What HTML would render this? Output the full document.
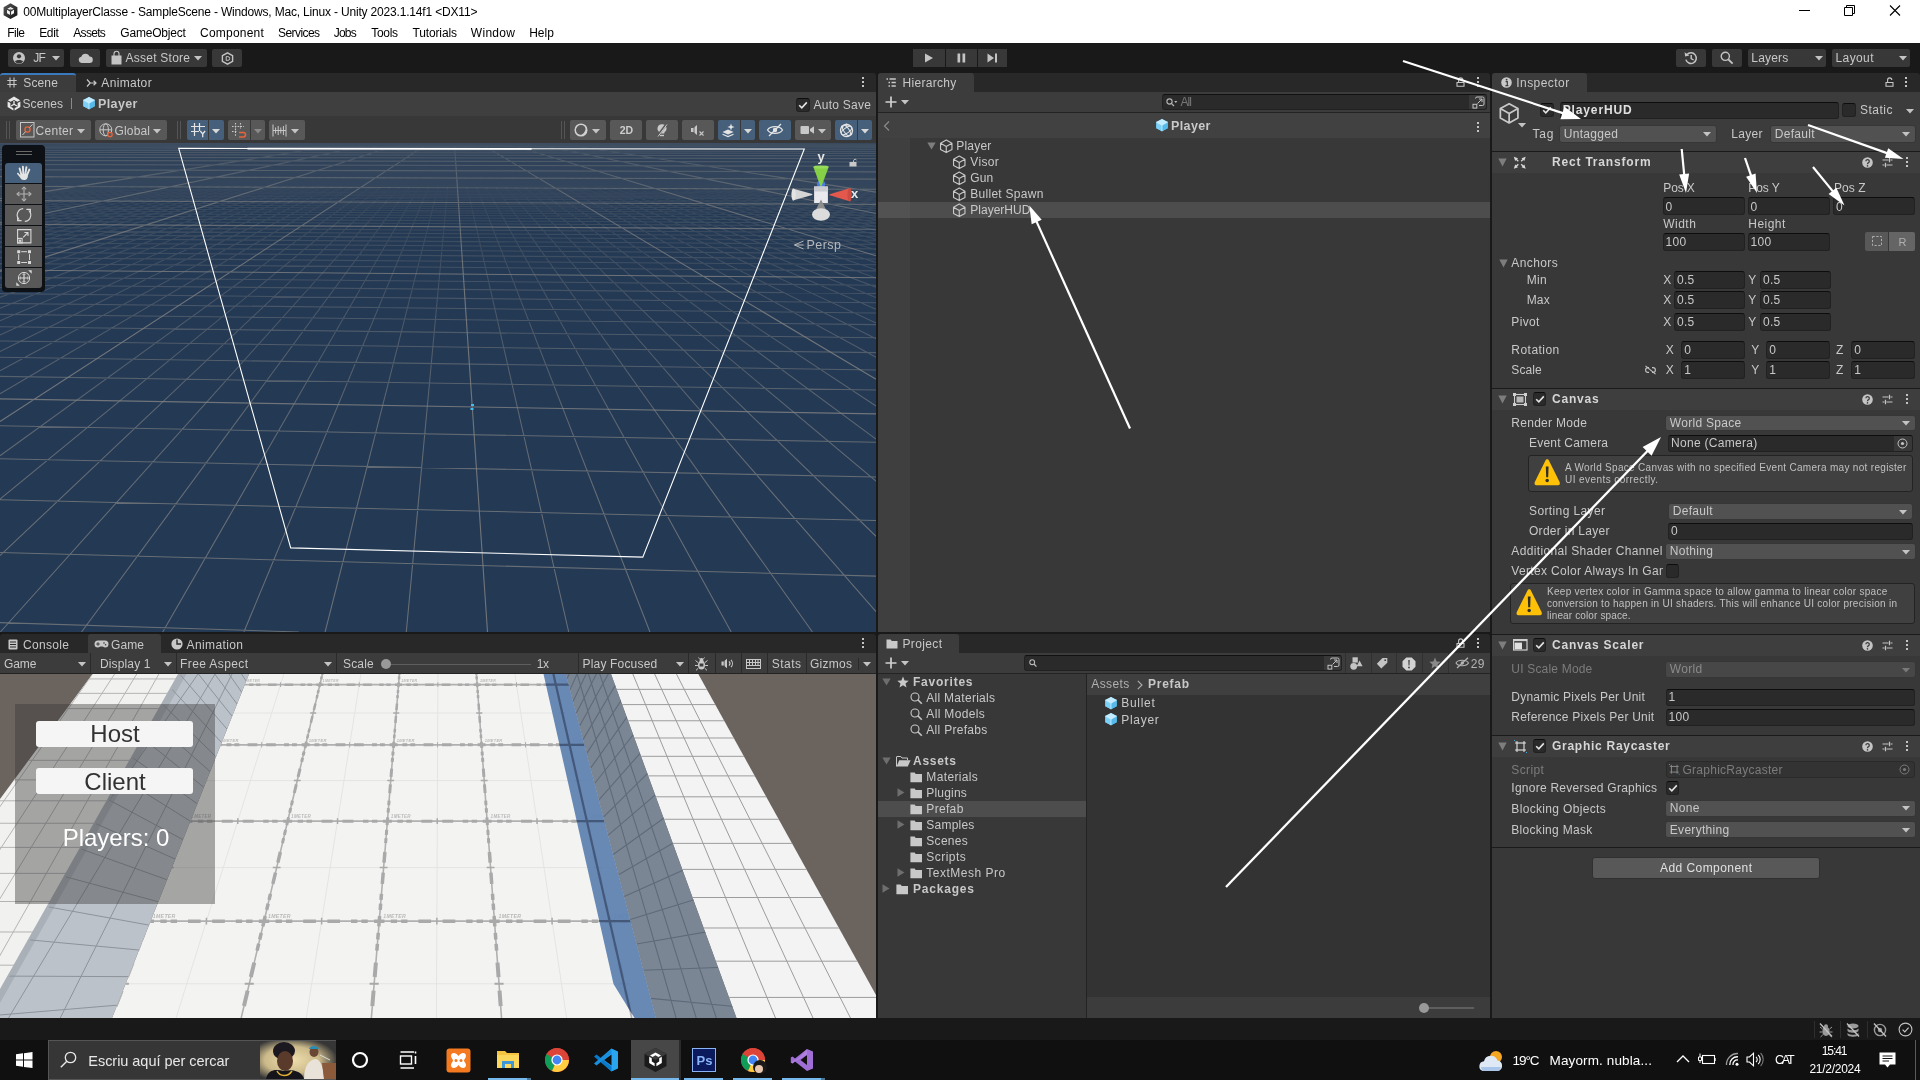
<!DOCTYPE html>
<html><head><meta charset="utf-8"><title>Unity</title><style>html,body{margin:0;padding:0}body{width:1920px;height:1080px;position:relative;overflow:hidden;background:#191919;font-family:"Liberation Sans",sans-serif;font-size:12px;color:#c8c8c8}.a{position:absolute}.t{white-space:nowrap}svg{overflow:visible;display:block}</style></head><body><div class="a" style="left:0;top:0;width:1920px;height:1080px;will-change:transform">
<div class="a" style="left:0px;top:0px;width:1920px;height:43px;background:#ffffff;"></div>
<svg class="a" style="left:3px;top:3px;" width="15" height="17" viewBox="0 0 15 17"><defs><linearGradient id="ug" x1="0" y1="0" x2="1" y2="1"><stop offset="0" stop-color="#5a5a5a"/><stop offset="1" stop-color="#111"/></linearGradient></defs><path d="M7.5 0.3 L14.4 4.2 V12.2 L7.5 16.1 L0.6 12.2 V4.2Z" fill="url(#ug)"/><path d="M7.5 4 L11 6 V10.2 L7.5 12.3 L4 10.2 V6Z" fill="#f4f4f4"/><path d="M7.5 8.2 V12.3 M7.5 8.2 L4 6 M7.5 8.2 L11 6" stroke="#333" stroke-width="1.1" fill="none"/><path d="M7.5 5.6 L9.6 6.9 L7.5 8.2 L5.4 6.9Z" fill="#333" opacity="0.55"/></svg>
<div class="a t" style="left:23.3px;top:3.5px;font-size:12px;line-height:16px;letter-spacing:-0.18px;color:#000;">00MultiplayerClasse - SampleScene - Windows, Mac, Linux - Unity 2023.1.14f1 &lt;DX11&gt;</div>
<div class="a t" style="left:7.2px;top:24.5px;font-size:12px;line-height:16px;letter-spacing:-0.51px;color:#000;">File</div>
<div class="a t" style="left:39.2px;top:24.5px;font-size:12px;line-height:16px;letter-spacing:-0.37px;color:#000;">Edit</div>
<div class="a t" style="left:73.3px;top:24.5px;font-size:12px;line-height:16px;letter-spacing:-0.7px;color:#000;">Assets</div>
<div class="a t" style="left:120.3px;top:24.5px;font-size:12px;line-height:16px;letter-spacing:-0.21px;color:#000;">GameObject</div>
<div class="a t" style="left:200px;top:24.5px;font-size:12px;line-height:16px;letter-spacing:0.22px;color:#000;">Component</div>
<div class="a t" style="left:278px;top:24.5px;font-size:12px;line-height:16px;letter-spacing:-0.57px;color:#000;">Services</div>
<div class="a t" style="left:333.8px;top:24.5px;font-size:12px;line-height:16px;letter-spacing:-0.81px;color:#000;">Jobs</div>
<div class="a t" style="left:371.2px;top:24.5px;font-size:12px;line-height:16px;letter-spacing:-0.3px;color:#000;">Tools</div>
<div class="a t" style="left:412.5px;top:24.5px;font-size:12px;line-height:16px;letter-spacing:-0.14px;color:#000;">Tutorials</div>
<div class="a t" style="left:470.8px;top:24.5px;font-size:12px;line-height:16px;letter-spacing:0.3px;color:#000;">Window</div>
<div class="a t" style="left:529.2px;top:24.5px;font-size:12px;line-height:16px;letter-spacing:-0.02px;color:#000;">Help</div>
<svg class="a" style="left:1797px;top:4px;" width="110" height="14" viewBox="0 0 110 14"><path d="M2 6.5H13" stroke="#000" stroke-width="1"/><path d="M47.5 3.5H55.5V11.5H47.5Z M49.5 3.5V1.5H57.5V9.5H55.5" fill="none" stroke="#000" stroke-width="1"/><path d="M93 1.5 L103 11.5 M103 1.5 L93 11.5" stroke="#000" stroke-width="1.1"/></svg>
<div class="a" style="left:0px;top:43px;width:1920px;height:30px;background:#191919;"></div>
<div class="a" style="left:8px;top:49px;width:56px;height:18px;background:#383838;border-radius:2px;"></div>
<div class="a" style="left:70px;top:49px;width:30px;height:18px;background:#383838;border-radius:2px;"></div>
<div class="a" style="left:106px;top:49px;width:101px;height:18px;background:#383838;border-radius:2px;"></div>
<div class="a" style="left:212px;top:49px;width:30px;height:18px;background:#383838;border-radius:2px;"></div>
<svg class="a" style="left:13px;top:52px;" width="12" height="12" viewBox="0 0 12 12"><circle cx="6" cy="6" r="6" fill="#c4c4c4"/><circle cx="6" cy="4.3" r="2.1" fill="#383838"/><path d="M2 9.6 C3 7.6 9 7.6 10 9.6 C9 11 7.5 11.6 6 11.6 C4.5 11.6 3 11 2 9.6Z" fill="#383838"/></svg>
<div class="a t" style="left:33.3px;top:50px;font-size:12px;line-height:16px;letter-spacing:-0.82px;">JF</div>
<svg class="a" style="left:52px;top:56px;" width="8" height="4.5" viewBox="0 0 8 4.5"><path d="M0 0H8 L4 4.5Z" fill="#c4c4c4"/></svg>
<svg class="a" style="left:77.5px;top:53px;" width="15" height="10" viewBox="0 0 15 10"><path d="M3.5 10 A3.2 3.2 0 0 1 3.3 3.7 A4.4 4.4 0 0 1 11.6 3.6 A3.2 3.2 0 0 1 11.6 10Z" fill="#c4c4c4"/></svg>
<svg class="a" style="left:110.5px;top:51px;" width="11" height="14" viewBox="0 0 11 14"><path d="M0.5 4.5H10.5V13.5H0.5Z" fill="#c4c4c4"/><path d="M3 5V2.8A2.5 2.5 0 0 1 8 2.8V5" fill="none" stroke="#c4c4c4" stroke-width="1.1"/></svg>
<div class="a t" style="left:125.5px;top:50px;font-size:12px;line-height:16px;letter-spacing:0.25px;">Asset Store</div>
<svg class="a" style="left:194px;top:56px;" width="8" height="4.5" viewBox="0 0 8 4.5"><path d="M0 0H8 L4 4.5Z" fill="#c4c4c4"/></svg>
<svg class="a" style="left:220.5px;top:52px;" width="13" height="13" viewBox="0 0 13 13"><path d="M6.5 0.8 L11.6 3.7 V9.3 L6.5 12.2 L1.4 9.3 V3.7Z" fill="none" stroke="#c4c4c4" stroke-width="1.4"/><path d="M5.2 4.6H6.8A1.9 1.9 0 0 1 6.8 8.4H5.2Z" fill="none" stroke="#c4c4c4" stroke-width="1"/></svg>
<div class="a" style="left:913px;top:49px;width:31.5px;height:18px;background:#383838;"></div>
<div class="a" style="left:945.5px;top:49px;width:31px;height:18px;background:#383838;"></div>
<div class="a" style="left:977.5px;top:49px;width:29.5px;height:18px;background:#383838;"></div>
<svg class="a" style="left:924px;top:53px;" width="10" height="10" viewBox="0 0 10 10"><path d="M1 0.5 L9 5 L1 9.5Z" fill="#c4c4c4"/></svg>
<svg class="a" style="left:956.5px;top:53px;" width="9" height="10" viewBox="0 0 9 10"><path d="M0.5 0.5H3.2V9.5H0.5Z M5.5 0.5H8.2V9.5H5.5Z" fill="#c4c4c4"/></svg>
<svg class="a" style="left:986.5px;top:53px;" width="11" height="10" viewBox="0 0 11 10"><path d="M0.5 0.5 L7 5 L0.5 9.5Z M8 0.5H10V9.5H8Z" fill="#c4c4c4"/></svg>
<div class="a" style="left:1676px;top:49px;width:30px;height:18px;background:#383838;border-radius:2px;"></div>
<div class="a" style="left:1712px;top:49px;width:30px;height:18px;background:#383838;border-radius:2px;"></div>
<svg class="a" style="left:1684px;top:51px;" width="15" height="14" viewBox="0 0 15 14"><path d="M3 3.6 A5.3 5.3 0 1 1 1.9 8.6" fill="none" stroke="#c4c4c4" stroke-width="1.5"/><path d="M0.6 1.2 L1.1 5.6 L5.4 4.6Z" fill="#c4c4c4"/><path d="M7.2 4V7.6L9.6 9" fill="none" stroke="#c4c4c4" stroke-width="1.4"/></svg>
<svg class="a" style="left:1720px;top:51px;" width="14" height="14" viewBox="0 0 14 14"><circle cx="5.3" cy="5.3" r="4.1" fill="none" stroke="#c4c4c4" stroke-width="1.4"/><path d="M8.3 8.3 L12.6 12.6" stroke="#c4c4c4" stroke-width="1.9"/></svg>
<div class="a" style="left:1748px;top:49px;width:78px;height:18px;background:#383838;border-radius:2px;"></div>
<div class="a t" style="left:1751.3px;top:50px;font-size:12px;line-height:16px;letter-spacing:0.2px;">Layers</div>
<svg class="a" style="left:1815px;top:56px;" width="8" height="4.5" viewBox="0 0 8 4.5"><path d="M0 0H8 L4 4.5Z" fill="#c4c4c4"/></svg>
<div class="a" style="left:1832px;top:49px;width:78px;height:18px;background:#383838;border-radius:2px;"></div>
<div class="a t" style="left:1835.5px;top:50px;font-size:12px;line-height:16px;letter-spacing:0.39px;">Layout</div>
<svg class="a" style="left:1899px;top:56px;" width="8" height="4.5" viewBox="0 0 8 4.5"><path d="M0 0H8 L4 4.5Z" fill="#c4c4c4"/></svg>
<div class="a" style="left:0px;top:73px;width:876px;height:19px;background:#282828;border-radius:3px 3px 0 0;"></div>
<div class="a" style="left:0px;top:73px;width:76px;height:19px;background:#3c3c3c;border-radius:3px 3px 0 0;border-top:2px solid #3a79bb;box-sizing:border-box;"></div>
<svg class="a" style="left:7px;top:77px;" width="10" height="11" viewBox="0 0 10 11"><path d="M3 0.5V10.5M7 0.5V10.5M0.3 3.5H9.7M0.3 7.5H9.7" stroke="#c8c8c8" stroke-width="1.1" fill="none"/></svg>
<div class="a t" style="left:23.3px;top:75px;font-size:12px;line-height:16px;letter-spacing:0.12px;">Scene</div>
<svg class="a" style="left:86px;top:77.5px;" width="11" height="10" viewBox="0 0 11 10"><path d="M1 1.5 L4.2 5 L1 8.5 M4.2 5 H10 M7.6 2.8 L10 5 L7.6 7.2" stroke="#c8c8c8" stroke-width="1.2" fill="none"/></svg>
<div class="a t" style="left:101.3px;top:75px;font-size:12px;line-height:16px;letter-spacing:0.33px;">Animator</div>
<svg class="a" style="left:862px;top:77px;" width="2" height="10" viewBox="0 0 2 10"><rect x="0" y="0" width="2" height="2" fill="#c4c4c4"/><rect x="0" y="4" width="2" height="2" fill="#c4c4c4"/><rect x="0" y="8" width="2" height="2" fill="#c4c4c4"/></svg>
<div class="a" style="left:0px;top:92px;width:876px;height:24px;background:#3f3f3f;"></div>
<svg class="a" style="left:6.5px;top:96px;" width="14" height="15" viewBox="0 0 14 15"><path d="M7 0.6 L13.2 4.2 L10.4 5.8 L7 3.9 L3.6 5.8 L0.8 4.2Z M0.6 5.4 L3.4 7 V10.6 L6.4 12.3 V14.4 L0.6 11.1Z M13.4 5.4 V11.1 L7.6 14.4 V12.3 L10.6 10.6 V7Z" fill="#e8e8e8"/><path d="M7 5.2 L9.6 6.7 L7 8.2 L4.4 6.7Z M4.1 7.5 L6.5 8.9 V11.2 L4.1 9.9Z M9.9 7.5 V9.9 L7.5 11.2 V8.9Z" fill="#e8e8e8" opacity="0.0"/><path d="M7 8.3 V5 M7 8.3 L4 10 M7 8.3 L10 10" stroke="#e8e8e8" stroke-width="1.3"/></svg>
<div class="a t" style="left:22.5px;top:95.5px;font-size:12px;line-height:16px;letter-spacing:0.1px;">Scenes</div>
<div class="a" style="left:71px;top:98px;width:1px;height:11px;background:#8a8a8a;"></div>
<svg class="a" style="left:81.5px;top:96px;" width="14" height="14" viewBox="0 0 16 16"><path d="M8 1 L14.5 4.6 V11.6 L8 15.2 L1.5 11.6 V4.6Z" fill="#7bd0f8"/><path d="M8 1 L14.5 4.6 L8 8.2 L1.5 4.6Z" fill="#c1ecff"/><path d="M1.5 4.6 L8 8.2 V15.2 L1.5 11.6Z" fill="#7bd0f8"/><path d="M8 8.2 L14.5 4.6 V11.6 L8 15.2Z" fill="#55b9ea"/><path d="M1.5 4.6 L8 8.2 L14.5 4.6 M8 8.2V15.2" stroke="#e9f8ff" stroke-width="0.7" fill="none"/></svg>
<div class="a t" style="left:98px;top:95.5px;font-size:12.5px;line-height:16px;letter-spacing:0.39px;font-weight:bold;">Player</div>
<div class="a" style="left:796px;top:98px;width:14px;height:14px;background:#2a2a2a;border:1px solid #212121;border-top-color:#0d0d0d;border-radius:3px;box-sizing:border-box;"></div>
<svg class="a" style="left:796px;top:98px;" width="14" height="14" viewBox="0 0 14 14"><path d="M3.2 7.2 L5.8 9.8 L10.8 4.4" fill="none" stroke="#e4e4e4" stroke-width="1.6"/></svg>
<div class="a t" style="left:813.5px;top:97px;font-size:12px;line-height:16px;letter-spacing:0.26px;">Auto Save</div>
<div class="a" style="left:0px;top:116px;width:876px;height:27px;background:#383838;"></div>
<div class="a" style="left:6px;top:121px;width:1px;height:18px;background:#555;"></div>
<div class="a" style="left:9px;top:121px;width:1px;height:18px;background:#555;"></div>
<div class="a" style="left:16px;top:120px;width:75px;height:20px;background:#585858;border-radius:2px;"></div>
<div class="a" style="left:95px;top:120px;width:72px;height:20px;background:#585858;border-radius:2px;"></div>
<svg class="a" style="left:20px;top:122px;" width="15" height="16" viewBox="0 0 15 16"><rect x="0.5" y="0.5" width="13.5" height="14.5" fill="none" stroke="#c8c8c8" stroke-width="1"/><circle cx="7.5" cy="7.5" r="2.6" fill="none" stroke="#e8643c" stroke-width="1.3"/><path d="M2.5 13 L5.5 9.7 M9.5 5.5 L12.5 2.3" stroke="#c8c8c8" stroke-width="1"/></svg>
<div class="a t" style="left:35.5px;top:122.5px;font-size:12px;line-height:16px;letter-spacing:0.3px;">Center</div>
<svg class="a" style="left:77px;top:129px;" width="8" height="4.5" viewBox="0 0 8 4.5"><path d="M0 0H8 L4 4.5Z" fill="#c4c4c4"/></svg>
<svg class="a" style="left:98.5px;top:122.5px;" width="15" height="15" viewBox="0 0 15 15"><circle cx="6.8" cy="6.8" r="6" fill="none" stroke="#c8c8c8" stroke-width="1"/><ellipse cx="6.8" cy="6.8" rx="2.6" ry="6" fill="none" stroke="#c8c8c8" stroke-width="1"/><path d="M0.8 6.8H12.8" stroke="#c8c8c8" stroke-width="1"/><circle cx="11" cy="11.5" r="2.2" fill="#585858" stroke="#e8643c" stroke-width="1.3"/></svg>
<div class="a t" style="left:114.5px;top:122.5px;font-size:12px;line-height:16px;letter-spacing:0.16px;">Global</div>
<svg class="a" style="left:153px;top:129px;" width="8" height="4.5" viewBox="0 0 8 4.5"><path d="M0 0H8 L4 4.5Z" fill="#c4c4c4"/></svg>
<div class="a" style="left:177px;top:121px;width:1px;height:18px;background:#555;"></div>
<div class="a" style="left:180px;top:121px;width:1px;height:18px;background:#555;"></div>
<div class="a" style="left:187px;top:120px;width:21px;height:20px;background:#46607c;border-radius:2px 0 0 2px;"></div>
<div class="a" style="left:209px;top:120px;width:15px;height:20px;background:#46607c;border-radius:0 2px 2px 0;"></div>
<svg class="a" style="left:190px;top:122px;" width="17" height="16" viewBox="0 0 17 16"><path d="M4.5 1V14M9.5 1V9M1 4.5H15M1 9.5H9" stroke="#e4e4e4" stroke-width="1.2" fill="none"/><path d="M10.3 9 L12.7 12 L15.1 9 M12.7 12V15.3" stroke="#e4e4e4" stroke-width="1.3" fill="none"/></svg>
<svg class="a" style="left:212px;top:129px;" width="8" height="4.5" viewBox="0 0 8 4.5"><path d="M0 0H8 L4 4.5Z" fill="#d8d8d8"/></svg>
<div class="a" style="left:228px;top:120px;width:21.5px;height:20px;background:#585858;border-radius:2px 0 0 2px;"></div>
<div class="a" style="left:250.5px;top:120px;width:14.5px;height:20px;background:#585858;border-radius:0 2px 2px 0;"></div>
<svg class="a" style="left:231px;top:122px;" width="17" height="16" viewBox="0 0 17 16"><path d="M4.5 1V14M9.5 1V7M1 4.5H13M1 9.5H6" stroke="#c8c8c8" stroke-width="1.1" stroke-dasharray="1.6 1.2" fill="none"/><path d="M8 10.5H12.3A2.2 2.2 0 0 1 12.3 14.9H8" stroke="#e8643c" stroke-width="1.5" fill="none"/></svg>
<svg class="a" style="left:254px;top:129px;" width="8" height="4.5" viewBox="0 0 8 4.5"><path d="M0 0H8 L4 4.5Z" fill="#8a8a8a"/></svg>
<div class="a" style="left:269px;top:120px;width:36px;height:20px;background:#585858;border-radius:2px;"></div>
<svg class="a" style="left:272px;top:123.5px;" width="15" height="13" viewBox="0 0 15 13"><path d="M1 0.5V12.5M14 0.5V12.5M3.6 3.5V9.5M6.2 2V11M8.8 3.5V9.5M11.4 2V11M1 6.5H14" stroke="#c8c8c8" stroke-width="1" fill="none"/></svg>
<svg class="a" style="left:291px;top:129px;" width="8" height="4.5" viewBox="0 0 8 4.5"><path d="M0 0H8 L4 4.5Z" fill="#c4c4c4"/></svg>
<div class="a" style="left:560.5px;top:121px;width:1px;height:18px;background:#555;"></div>
<div class="a" style="left:563.5px;top:121px;width:1px;height:18px;background:#555;"></div>
<div class="a" style="left:570px;top:120px;width:36px;height:20px;background:#585858;border-radius:2px;"></div>
<div class="a" style="left:610px;top:120px;width:32px;height:20px;background:#585858;border-radius:2px;"></div>
<div class="a" style="left:646px;top:120px;width:32px;height:20px;background:#585858;border-radius:2px;"></div>
<div class="a" style="left:682px;top:120px;width:32px;height:20px;background:#585858;border-radius:2px;"></div>
<div class="a" style="left:718px;top:120px;width:21.5px;height:20px;background:#46607c;border-radius:2px 0 0 2px;"></div>
<div class="a" style="left:740.5px;top:120px;width:14.5px;height:20px;background:#46607c;border-radius:0 2px 2px 0;"></div>
<div class="a" style="left:759px;top:120px;width:32px;height:20px;background:#46607c;border-radius:2px;"></div>
<div class="a" style="left:795px;top:120px;width:36px;height:20px;background:#585858;border-radius:2px;"></div>
<div class="a" style="left:835px;top:120px;width:21.5px;height:20px;background:#46607c;border-radius:2px 0 0 2px;"></div>
<div class="a" style="left:857.5px;top:120px;width:14.5px;height:20px;background:#46607c;border-radius:0 2px 2px 0;"></div>
<svg class="a" style="left:574px;top:123px;" width="15" height="14" viewBox="0 0 15 14"><circle cx="7" cy="7" r="5.8" fill="none" stroke="#d0d0d0" stroke-width="1.5"/><path d="M12.2 4 A6.3 6.3 0 0 1 2.6 11.6 A6.6 6.6 0 0 0 10.9 2.6Z" fill="#d0d0d0"/><path d="M11.6 3.4 A5.6 5.6 0 0 1 3.2 11.8 A4.6 4.6 0 0 0 11.6 3.4Z" fill="#d0d0d0"/></svg>
<svg class="a" style="left:592px;top:129px;" width="8" height="4.5" viewBox="0 0 8 4.5"><path d="M0 0H8 L4 4.5Z" fill="#c4c4c4"/></svg>
<div class="a t" style="left:619.7px;top:122px;font-size:10.5px;line-height:16px;color:#cdcdcd;font-weight:bold;">2D</div>
<svg class="a" style="left:655px;top:122.5px;" width="14" height="15" viewBox="0 0 14 15"><path d="M7 1.2 A4.3 4.3 0 0 1 9.4 9.2 V10.6H4.6V9.2 A4.3 4.3 0 0 1 7 1.2Z" fill="#c8c8c8"/><path d="M5 11.8H9V13.2H5Z" fill="#c8c8c8"/><path d="M2.5 13 L11.5 1" stroke="#585858" stroke-width="2.2"/><path d="M3 13.5 L12 1.5" stroke="#c8c8c8" stroke-width="1"/></svg>
<svg class="a" style="left:690px;top:124px;" width="16" height="13" viewBox="0 0 16 13"><path d="M1 4H3.5L7 1V11L3.5 8H1Z" fill="#c8c8c8"/><path d="M4 2.5V9.5" stroke="#585858" stroke-width="0.9"/><path d="M9.5 7.5 L13.5 11.5 M13.5 7.5 L9.5 11.5" stroke="#c8c8c8" stroke-width="1.1"/></svg>
<svg class="a" style="left:721px;top:123px;" width="16" height="14" viewBox="0 0 16 14"><path d="M1.5 9 L7 6.6 L12.5 9 L7 11.4Z" fill="#e4e4e4"/><path d="M1.5 11.2 L7 13.6 L12.5 11.2" stroke="#e4e4e4" stroke-width="1.1" fill="none"/><path d="M10 0.5 L10.9 3.1 L13.5 4 L10.9 4.9 L10 7.5 L9.1 4.9 L6.5 4 L9.1 3.1Z" fill="#e4e4e4"/></svg>
<svg class="a" style="left:744px;top:129px;" width="8" height="4.5" viewBox="0 0 8 4.5"><path d="M0 0H8 L4 4.5Z" fill="#d8d8d8"/></svg>
<svg class="a" style="left:766px;top:123px;" width="18" height="14" viewBox="0 0 18 14"><path d="M1.5 7 C4 2.6 14 2.6 16.5 7 C14 11.4 4 11.4 1.5 7Z" fill="none" stroke="#e4e4e4" stroke-width="1.2"/><circle cx="9" cy="7" r="2.2" fill="#e4e4e4"/><path d="M3 13 L15 1" stroke="#e4e4e4" stroke-width="1.3"/></svg>
<svg class="a" style="left:799.5px;top:125px;" width="15" height="10" viewBox="0 0 15 10"><rect x="0.5" y="1" width="8.5" height="8" rx="1" fill="#c8c8c8"/><path d="M10 4 L14 1.2 V8.8 L10 6Z" fill="#c8c8c8"/></svg>
<svg class="a" style="left:818px;top:129px;" width="8" height="4.5" viewBox="0 0 8 4.5"><path d="M0 0H8 L4 4.5Z" fill="#c4c4c4"/></svg>
<svg class="a" style="left:838.5px;top:122.5px;" width="15" height="15" viewBox="0 0 15 15"><circle cx="7.5" cy="7.5" r="6" fill="none" stroke="#e4e4e4" stroke-width="1.3"/><ellipse cx="7.5" cy="7.5" rx="6" ry="2.6" fill="none" stroke="#e4e4e4" stroke-width="1" transform="rotate(-35 7.5 7.5)"/><ellipse cx="7.5" cy="7.5" rx="2.6" ry="6" fill="none" stroke="#e4e4e4" stroke-width="1" transform="rotate(-35 7.5 7.5)"/><circle cx="3.2" cy="3.8" r="1.3" fill="#e4e4e4"/><circle cx="12" cy="11" r="1.3" fill="#e4e4e4"/><circle cx="7.5" cy="1.6" r="1.2" fill="#e4e4e4"/></svg>
<svg class="a" style="left:861px;top:129px;" width="8" height="4.5" viewBox="0 0 8 4.5"><path d="M0 0H8 L4 4.5Z" fill="#d8d8d8"/></svg>
<div class="a" style="left:0px;top:143px;width:876px;height:489px;background:#233954;"></div>
<svg class="a" style="left:0px;top:143px;" width="876" height="489" viewBox="0 143 876 489"><defs><linearGradient id="gf" x1="0" y1="143" x2="0" y2="632" gradientUnits="userSpaceOnUse"><stop offset="0" stop-color="#fff" stop-opacity="0.1"/><stop offset="0.06" stop-color="#fff" stop-opacity="0.22"/><stop offset="0.3" stop-color="#fff" stop-opacity="0.5"/><stop offset="0.55" stop-color="#fff" stop-opacity="0.85"/><stop offset="0.75" stop-color="#fff" stop-opacity="1"/></linearGradient><mask id="gm" maskUnits="userSpaceOnUse" x="0" y="143" width="876" height="489"><rect x="0" y="143" width="876" height="489" fill="url(#gf)"/></mask><linearGradient id="gf2" x1="0" y1="143" x2="0" y2="632" gradientUnits="userSpaceOnUse"><stop offset="0" stop-color="#fff" stop-opacity="0.35"/><stop offset="0.12" stop-color="#fff" stop-opacity="0.8"/><stop offset="0.3" stop-color="#fff" stop-opacity="1"/></linearGradient><mask id="gm2" maskUnits="userSpaceOnUse" x="0" y="143" width="876" height="489"><rect x="0" y="143" width="876" height="489" fill="url(#gf2)"/></mask></defs><g mask="url(#gm)"><path d="M0 172.47L8.73 171.6M0 173.2L21.51 171.02M0 173.95L33.79 170.47M0 175.54L57.02 169.47M0 176.37L68.04 169.01M0 177.24L78.7 168.57M0 178.13L89.02 168.15M0 179.06L99.04 167.76M0 180.03L108.76 167.38M0 181.03L118.21 167.02M0 182.07L127.41 166.67M0 183.15L136.38 166.35M0 185.44L153.65 165.74M0 186.66L161.98 165.45M0 187.93L170.13 165.18M0 189.26L178.11 164.92M0 190.64L185.92 164.67M0 192.09L193.58 164.43M0 193.61L201.09 164.2M0 195.2L208.46 163.98M0 196.87L215.7 163.77M0 200.47L229.82 163.38M0 202.41L236.71 163.2M0 204.46L243.5 163.02M0 206.63L250.18 162.85M0 208.92L256.77 162.69M0 211.34L263.28 162.54M0 213.92L269.69 162.39M0 216.66L276.03 162.25M0 219.58L282.3 162.12M0 226.02L294.61 161.87M0 229.6L300.67 161.75M0 233.44L306.67 161.64M0 237.58L312.61 161.54M0 242.06L318.49 161.44M0 246.93L324.33 161.35M0 252.22L330.12 161.26M0 258L335.86 161.17M0 264.34L341.56 161.09M0 279.08L352.84 160.95M0 287.71L358.43 160.89M0 297.37L363.98 160.83M0 308.28L369.51 160.77M0 320.68L375 160.72M0 334.91L380.48 160.67M0 351.41L385.92 160.63M0 370.75L391.35 160.59M0 393.74L396.76 160.55M0 455.82L407.53 160.5M0 499.15L412.89 160.48M0 555.65L418.25 160.46M0.35 632L423.59 160.44M81.52 632L428.93 160.43M162.7 632L434.26 160.43M243.89 632L439.59 160.42M325.09 632L444.92 160.43M406.29 632L450.24 160.43M568.72 632L460.91 160.45M649.95 632L466.25 160.47M731.19 632L471.6 160.49M812.43 632L476.96 160.52M876 611.73L482.34 160.55M876 536.26L487.72 160.58M876 481.14L493.13 160.62M876 439.1L498.55 160.66M876 405.99L503.99 160.71M876 357.16L514.94 160.81M876 338.65L520.46 160.87M876 322.89L526 160.93M876 309.32L531.58 161M876 297.51L537.19 161.07M876 287.13L542.83 161.15M876 277.95L548.51 161.23M876 269.77L554.24 161.32M876 262.42L560.01 161.41M876 249.8L571.69 161.6M876 244.33L577.6 161.71M876 239.32L583.58 161.82M876 234.73L589.61 161.94M876 230.5L595.7 162.06M876 226.59L601.86 162.19M876 222.96L608.08 162.33M876 219.59L614.38 162.47M876 216.45L620.76 162.62M876 210.77L633.76 162.93M876 208.19L640.39 163.1M876 205.77L647.11 163.28M876 203.48L653.94 163.46M876 201.33L660.87 163.65M876 199.29L667.91 163.85M876 197.37L675.07 164.06M876 195.54L682.35 164.28M876 193.8L689.77 164.5M876 190.59L705.01 164.99M876 189.09L712.86 165.24M876 187.67L720.87 165.51M876 186.3L729.06 165.79M876 185L737.42 166.09M876 183.76L745.98 166.39M876 182.56L754.75 166.71M876 181.42L763.73 167.05M876 180.32L772.95 167.4M876 178.25L792.13 168.15M876 177.28L802.14 168.55M876 176.34L812.45 168.97M876 175.44L823.07 169.41M876 174.57L834.05 169.88M876 173.73L845.4 170.37M876 172.92L857.14 170.88M876 172.13L869.32 171.43M0 622.59L298.77 632M0 552.49L876 576.14M0 499.78L876 520.46M0 458.7L876 477.07M0 425.79L876 442.3M0 376.33L876 390.06M0 357.27L876 369.93M0 340.93L876 352.67M0 326.76L876 337.7M0 314.35L876 324.6M0 303.4L876 313.03M0 293.66L876 302.74M0 284.94L876 293.53M0 277.09L876 285.24M0 263.53L876 270.91M0 257.62L876 264.68M0 252.22L876 258.96M0 247.24L876 253.7M0 242.64L876 248.85M0 238.38L876 244.35M0 234.43L876 240.18M0 230.75L876 236.29M0 227.31L876 232.66M0 221.08L876 226.08M0 218.25L876 223.09M0 215.59L876 220.27M0 213.07L876 217.62M0 210.7L876 215.11M0 208.45L876 212.74M0 206.32L876 210.49M0 204.31L876 208.36M0 202.39L876 206.33M0 198.82L876 202.57M0 197.17L876 200.82M0 195.58L876 199.14M0 194.07L876 197.55M0 192.63L876 196.02M0 191.24L876 194.56M0 189.91L876 193.15M0 188.64L876 191.81M0 187.42L876 190.52M0 185.11L876 188.09M0 184.03L876 186.94M0 182.98L876 185.83M0 181.97L876 184.77M0 181L876 183.74M0 180.06L876 182.75M0 179.15L876 181.79M0 178.28L876 180.87M0 177.43L876 179.97M0 175.82L876 178.27M0 175.06L876 177.46M0 174.31L876 176.68M0 173.59L876 175.91M0 172.89L876 175.18M0 172.22L876 174.46M0 171.56L876 173.77M0 170.92L876 173.09M0 170.3L876 172.44M0 169.11L876 171.18M0 168.54L876 170.58M0 167.98L876 169.99M0 167.44L876 169.42M0 166.92L876 168.87M0 166.41L876 168.33M0 165.91L876 167.8M0 165.42L876 167.28M0 164.95L876 166.78M0 164.03L876 165.82M0 163.59L876 165.35M0 163.16L876 164.9M0 162.74L876 164.45M0 162.33L876 164.02M0 161.93L876 163.6M0 161.54L876 163.18M0 161.16L876 162.78M0 160.78L876 162.39M0 160.06L876 161.62M0 159.71L876 161.25M0 159.37L876 160.89M0 159.03L876 160.53M0 158.7L876 160.19M0 158.38L876 159.85M0 158.06L876 159.51M0 157.75L876 159.19M0 157.45L876 158.87M0 156.86L876 158.25M0 156.58L876 157.94M0 156.3L876 157.65M0 156.02L876 157.36M0 155.75L876 157.07M0 155.49L876 156.79M0 155.23L876 156.52M0 154.98L876 156.25M0 154.73L876 155.99M0 154.24L876 155.47M0 154L876 155.22M0 153.77L876 154.98M0 153.54L876 154.73M0 153.31L876 154.5M0 153.09L876 154.26M0 152.88L876 154.03M4.79 152.67L876 153.81M12.56 152.47L876 153.59M27.99 152.08L876 153.15M35.64 151.89L876 152.94M43.26 151.7L876 152.74M50.84 151.52L876 152.53M58.4 151.33L867.92 152.32M65.94 151.15L859.59 152.11M73.46 150.98L851.31 151.91M80.96 150.8L843.06 151.71M88.45 150.63L834.83 151.51M103.41 150.3L818.45 151.12M110.89 150.14L810.29 150.93M118.38 149.97L802.13 150.75M125.88 149.82L793.98 150.56M133.4 149.66L785.82 150.38M140.94 149.51L777.65 150.2M148.51 149.35L769.47 150.03M156.11 149.2L761.27 149.85M163.76 149.06L753.03 149.68M179.22 148.77L736.44 149.35M187.05 148.63L728.06 149.19M194.96 148.49L719.61 149.03M202.96 148.35L711.08 148.87M211.07 148.21L702.45 148.71M219.3 148.08L693.71 148.56M227.67 147.95L684.85 148.4M236.2 147.82L675.83 148.25M244.92 147.69L666.64 148.1M263.03 147.44L647.6 147.81M272.49 147.32L637.69 147.67M282.31 147.2L627.43 147.52M292.54 147.08L616.77 147.38M303.27 146.96L605.62 147.24M314.62 146.85L593.85 147.11M326.79 146.74L581.28 146.97M340.02 146.63L567.64 146.83M354.76 146.52L552.5 146.7M393.3 146.32L513.2 146.42M428.81 146.23L477.32 146.27" stroke="#828282" stroke-opacity="0.72" stroke-width="1.1" fill="none"/></g><g mask="url(#gm2)"><path d="M0 198.63L353.57 143M0 222.69L378.74 143M0 271.34L403.93 143M0 421.54L429.15 143M487.5 632L454.4 143M876 379.23L479.66 143M876 255.8L504.96 143M876 213.52L530.28 143M876 192.16L555.63 143M0 398.82L876 413.82M0 269.99L876 277.73M0 224.1L876 229.26M0 200.56L876 204.4M0 186.24L876 189.28M0 176.61L876 179.11M0 169.7L876 171.8M0 164.48L876 166.29M0 160.42L876 162M0 157.15L876 158.55M0 154.48L876 155.73M0 152.25L876 153.37M0 150.35L876 151.37M0 148.73L876 149.65M0 147.32L876 148.17M0 146.09L876 146.86M0 145L876 145.71M0 144.03L876 144.69M0 143.16L876 143.77" stroke="#838383" stroke-opacity="0.8" stroke-width="1.15" fill="none"/></g><path d="M178.7 148.4 L804.3 149 L642.8 557.1 L290.7 547.9 Z" fill="none" stroke="#fff" stroke-width="1.1"/><path d="M247.5 148.6 L531.6 148.9" stroke="#fff" stroke-width="1.9"/><path d="M471 404H474V406H471Z M470.5 408H473.5V410H470.5Z" fill="#3fc0f0"/></svg>
<div class="a" style="left:2px;top:145px;width:43px;height:147px;background:#0d1014;border-radius:4px;"></div>
<div class="a" style="left:16px;top:151px;width:16px;height:1px;background:#6a6a6a;"></div>
<div class="a" style="left:16px;top:154px;width:16px;height:1px;background:#6a6a6a;"></div>
<div class="a" style="left:5px;top:163px;width:37px;height:20px;background:#46607c;border-radius:3px 3px 0 0;"></div>
<div class="a" style="left:5px;top:184px;width:37px;height:20px;background:#585858;border-radius:0;"></div>
<div class="a" style="left:5px;top:205px;width:37px;height:20px;background:#585858;border-radius:0;"></div>
<div class="a" style="left:5px;top:226px;width:37px;height:20px;background:#585858;border-radius:0;"></div>
<div class="a" style="left:5px;top:247px;width:37px;height:20px;background:#585858;border-radius:0;"></div>
<div class="a" style="left:5px;top:268px;width:37px;height:20px;background:#585858;border-radius:0 0 3px 3px;"></div>
<svg class="a" style="left:16px;top:164.5px;" width="16" height="16" viewBox="0 0 16 16"><path d="M5.2 9 L3.6 3.4 M7.3 8.4 L6.9 1.6 M9.4 8.6 L10.4 2.2 M11.2 9.6 L13.3 4.6" fill="none" stroke="#e4e4e4" stroke-width="1.9" stroke-linecap="round"/><path d="M4.3 8.4 L11.9 8.9 C12.4 12.6 10.8 15 8 15 C5.6 15 4.6 13.6 3.9 12.2 L1.2 8.9 C0.6 8 1.7 7.2 2.4 7.9 L4.4 10.2Z" fill="#e4e4e4"/></svg>
<svg class="a" style="left:16px;top:186px;" width="16" height="16" viewBox="0 0 16 16"><path d="M8 2V14M2 8H14" stroke="#b4b4b4" stroke-width="1.1"/><path d="M5.8 3.4 L8 1 L10.2 3.4 M5.8 12.6 L8 15 L10.2 12.6 M3.4 5.8 L1 8 L3.4 10.2 M12.6 5.8 L15 8 L12.6 10.2" fill="none" stroke="#b4b4b4" stroke-width="1.1"/></svg>
<svg class="a" style="left:16px;top:207px;" width="16" height="16" viewBox="0 0 16 16"><path d="M7.2 1.6 A6.4 6.4 0 0 0 3.2 12.6 M8.8 14.4 A6.4 6.4 0 0 0 12.8 3.4" fill="none" stroke="#d8d8d8" stroke-width="1.1"/><path d="M1.6 9.6 V13.6 H5.6 M10.4 2.4 H14.4 V6.4" fill="none" stroke="#d8d8d8" stroke-width="1.1"/></svg>
<svg class="a" style="left:16.5px;top:228.5px;" width="15" height="15" viewBox="0 0 15 15"><path d="M0.6 0.6H13.9V13.9H0.6Z" fill="none" stroke="#d8d8d8" stroke-width="1.1"/><rect x="0.6" y="9.4" width="4.5" height="4.5" fill="none" stroke="#d8d8d8" stroke-width="1.1"/><rect x="1.8" y="10.6" width="2.2" height="2.2" fill="#d8d8d8"/><path d="M6.2 8.3 L11 3.5 M7.4 3.5H11V7.1" fill="none" stroke="#d8d8d8" stroke-width="1.1"/></svg>
<svg class="a" style="left:17px;top:249.7px;" width="15" height="15" viewBox="0 0 15 15"><path d="M4.2 1.7H10M4.2 12.5H10M1.7 4.2V10M12.5 4.2V10" stroke="#d8d8d8" stroke-width="1"/><path d="M0.2 0.2H3.2V3.2H0.2Z M11 0.2H14V3.2H11Z M0.2 11H3.2V14H0.2Z M11 11H14V14H11Z" fill="#d8d8d8"/></svg>
<svg class="a" style="left:15.5px;top:270px;" width="16" height="16" viewBox="0 0 16 16"><circle cx="8" cy="8" r="5.6" fill="none" stroke="#d8d8d8" stroke-width="1"/><path d="M8 4.2V11.8M4.2 8H11.8" stroke="#d8d8d8" stroke-width="1.2"/><path d="M6.7 5 L8 3.4 L9.3 5 M6.7 11 L8 12.6 L9.3 11 M5 6.7 L3.4 8 L5 9.3 M11 6.7 L12.6 8 L11 9.3" fill="none" stroke="#d8d8d8" stroke-width="0.9"/><path d="M0.3 15.7V12.2L3.8 15.7Z M15.7 0.3H12.2L15.7 3.8Z" fill="#d8d8d8"/></svg>
<svg class="a" style="left:780px;top:150px;" width="96" height="75" viewBox="780 150 96 75"><ellipse cx="821" cy="184" rx="4.2" ry="3.6" fill="#4a78e0"/><path d="M813.3 167 H828.7 L821.6 186 H820.4Z" fill="#86d048"/><ellipse cx="821" cy="167" rx="7.7" ry="1.6" fill="#96dc5a"/><path d="M792.6 188.4 V200.6 L812.3 195 V194Z" fill="#d6d6d6"/><ellipse cx="793.6" cy="194.5" rx="2.2" ry="6.1" fill="#e4e4e4"/><path d="M850.4 188 V201.4 L829.6 195.2 V194.2Z" fill="#e2584c"/><ellipse cx="849.6" cy="194.7" rx="2.2" ry="6.7" fill="#cc4c42"/><rect x="814.1" y="186.5" width="13.8" height="16.5" fill="#e9e9ee"/><rect x="814.1" y="186.5" width="13.8" height="5" fill="#cbcbd2"/><path d="M821 199.5 L814 213.5 H828Z" fill="#8e8e8e"/><ellipse cx="821" cy="214.5" rx="9" ry="6.2" fill="#dcdcdc"/></svg>
<div class="a t" style="left:817.6px;top:148.6px;font-size:13px;line-height:16px;color:#e8e8e8;font-weight:bold;">y</div>
<div class="a t" style="left:851px;top:186px;font-size:13px;line-height:16px;color:#e8e8e8;font-weight:bold;">x</div>
<svg class="a" style="left:849px;top:158px;" width="8" height="9" viewBox="0 0 8 9"><path d="M0.5 4H7.5V8.5H0.5Z" fill="#c8c8c8"/><path d="M4.6 4V2.6A1.6 1.6 0 0 1 7.5 2" fill="none" stroke="#c8c8c8" stroke-width="1"/></svg>
<svg class="a" style="left:793px;top:240px;" width="11" height="10" viewBox="0 0 11 10"><path d="M10.5 1 L1.5 5 L10.5 9 M1.5 5 H10.5" fill="none" stroke="#b8b8b8" stroke-width="1"/></svg>
<div class="a t" style="left:806.5px;top:236.5px;font-size:12.5px;line-height:16px;letter-spacing:0.47px;color:#b4b8bd;">Persp</div>
<div class="a" style="left:0px;top:634px;width:876px;height:19px;background:#282828;border-radius:3px 3px 0 0;"></div>
<div class="a" style="left:88px;top:634px;width:73px;height:19px;background:#3c3c3c;border-radius:3px 3px 0 0;"></div>
<svg class="a" style="left:7.5px;top:638.5px;" width="10" height="11" viewBox="0 0 10 11"><rect x="0.5" y="0.5" width="9" height="10" rx="1" fill="#c8c8c8"/><path d="M2 3H8M2 5.5H8M2 8H8" stroke="#282828" stroke-width="1"/></svg>
<div class="a t" style="left:23px;top:636.5px;font-size:12px;line-height:16px;letter-spacing:0.33px;">Console</div>
<svg class="a" style="left:93.5px;top:640px;" width="15" height="8" viewBox="0 0 15 8"><path d="M4 0.5H11A3.5 3.5 0 0 1 11 7.5 C9.8 7.5 9.4 6.5 8.6 6.5 H6.4 C5.6 6.5 5.2 7.5 4 7.5 A3.5 3.5 0 0 1 4 0.5Z" fill="#c8c8c8"/><path d="M4 2.2V5.8M2.2 4H5.8" stroke="#3c3c3c" stroke-width="1"/><circle cx="10" cy="3" r="0.8" fill="#3c3c3c"/><circle cx="11.6" cy="4.8" r="0.8" fill="#3c3c3c"/></svg>
<div class="a t" style="left:111px;top:636.5px;font-size:12px;line-height:16px;letter-spacing:0.1px;">Game</div>
<svg class="a" style="left:170.5px;top:638px;" width="12" height="12" viewBox="0 0 12 12"><circle cx="6" cy="6" r="5.6" fill="#c8c8c8"/><path d="M6 1.5V6H10" stroke="#282828" stroke-width="1.4" fill="none"/></svg>
<div class="a t" style="left:186.5px;top:636.5px;font-size:12px;line-height:16px;letter-spacing:0.39px;">Animation</div>
<svg class="a" style="left:862px;top:638px;" width="2" height="10" viewBox="0 0 2 10"><rect x="0" y="0" width="2" height="2" fill="#c4c4c4"/><rect x="0" y="4" width="2" height="2" fill="#c4c4c4"/><rect x="0" y="8" width="2" height="2" fill="#c4c4c4"/></svg>
<div class="a" style="left:0px;top:653px;width:876px;height:21px;background:#3c3c3c;"></div>
<div class="a" style="left:0px;top:673px;width:876px;height:1px;background:#232323;"></div>
<div class="a" style="left:90px;top:653px;width:1px;height:20px;background:#2a2a2a;"></div>
<div class="a" style="left:175.8px;top:653px;width:1px;height:20px;background:#2a2a2a;"></div>
<div class="a" style="left:336px;top:653px;width:1px;height:20px;background:#2a2a2a;"></div>
<div class="a" style="left:578.3px;top:653px;width:1px;height:20px;background:#2a2a2a;"></div>
<div class="a" style="left:688.3px;top:653px;width:1px;height:20px;background:#2a2a2a;"></div>
<div class="a" style="left:714.7px;top:653px;width:1px;height:20px;background:#2a2a2a;"></div>
<div class="a" style="left:740.5px;top:653px;width:1px;height:20px;background:#2a2a2a;"></div>
<div class="a" style="left:766.7px;top:653px;width:1px;height:20px;background:#2a2a2a;"></div>
<div class="a" style="left:806.3px;top:653px;width:1px;height:20px;background:#2a2a2a;"></div>
<div class="a t" style="left:4px;top:655.5px;font-size:12px;line-height:16px;letter-spacing:-0.07px;">Game</div>
<svg class="a" style="left:78px;top:662px;" width="8" height="4.5" viewBox="0 0 8 4.5"><path d="M0 0H8 L4 4.5Z" fill="#c4c4c4"/></svg>
<div class="a t" style="left:100px;top:655.5px;font-size:12px;line-height:16px;letter-spacing:0.14px;">Display 1</div>
<svg class="a" style="left:164px;top:662px;" width="8" height="4.5" viewBox="0 0 8 4.5"><path d="M0 0H8 L4 4.5Z" fill="#c4c4c4"/></svg>
<div class="a t" style="left:180px;top:655.5px;font-size:12px;line-height:16px;letter-spacing:0.4px;">Free Aspect</div>
<svg class="a" style="left:324px;top:662px;" width="8" height="4.5" viewBox="0 0 8 4.5"><path d="M0 0H8 L4 4.5Z" fill="#c4c4c4"/></svg>
<div class="a t" style="left:343px;top:655.5px;font-size:12px;line-height:16px;letter-spacing:0.17px;">Scale</div>
<div class="a" style="left:386px;top:663.5px;width:145px;height:1.5px;background:#5e5e5e;"></div>
<div class="a" style="left:381px;top:659px;width:10px;height:10px;background:#999;border-radius:5px;"></div>
<div class="a t" style="left:536.7px;top:655.5px;font-size:12px;line-height:16px;letter-spacing:-0.36px;">1x</div>
<div class="a t" style="left:582.5px;top:655.5px;font-size:12px;line-height:16px;letter-spacing:0.18px;">Play Focused</div>
<svg class="a" style="left:676px;top:662px;" width="8" height="4.5" viewBox="0 0 8 4.5"><path d="M0 0H8 L4 4.5Z" fill="#c4c4c4"/></svg>
<svg class="a" style="left:693.5px;top:656.5px;" width="15" height="14" viewBox="0 0 15 14"><ellipse cx="7.5" cy="8" rx="3.6" ry="4.6" fill="#c8c8c8"/><circle cx="7.5" cy="3" r="2" fill="#c8c8c8"/><path d="M4 5.5 L1.5 3.5 M11 5.5 L13.5 3.5 M3.8 8.5 H1 M11.2 8.5 H14 M4.3 11.2 L2 13.4 M10.7 11.2 L13 13.4 M5.5 1.8 L4.5 0.5 M9.5 1.8 L10.5 0.5" stroke="#c8c8c8" stroke-width="1" fill="none"/><rect x="5.6" y="6.5" width="3.8" height="3" fill="#3c3c3c"/></svg>
<svg class="a" style="left:720.5px;top:658px;" width="13" height="11" viewBox="0 0 13 11"><path d="M0.5 3.5H2.8L6 0.8V10.2L2.8 7.5H0.5Z" fill="#c8c8c8"/><path d="M3.2 2.5V8.5" stroke="#3c3c3c" stroke-width="0.8"/><path d="M8 3.4 A3 3 0 0 1 8 7.6 M10 1.8 A5.5 5.5 0 0 1 10 9.2" fill="none" stroke="#c8c8c8" stroke-width="1.1"/></svg>
<svg class="a" style="left:745.5px;top:659px;" width="15" height="10" viewBox="0 0 15 10"><rect x="0.5" y="0.5" width="14" height="9" fill="none" stroke="#c8c8c8" stroke-width="1"/><path d="M1 3.5H14M1 6.5H14M3.5 0.5V6.5M6.5 0.5V6.5M9.5 0.5V6.5M12 0.5V6.5" stroke="#c8c8c8" stroke-width="1" fill="none"/></svg>
<div class="a t" style="left:771.7px;top:655.5px;font-size:12px;line-height:16px;letter-spacing:0.49px;">Stats</div>
<div class="a t" style="left:810px;top:655.5px;font-size:12px;line-height:16px;letter-spacing:0.26px;">Gizmos</div>
<div class="a" style="left:858.3px;top:658px;width:1px;height:12px;background:#2a2a2a;"></div>
<svg class="a" style="left:863px;top:662px;" width="8" height="4.5" viewBox="0 0 8 4.5"><path d="M0 0H8 L4 4.5Z" fill="#c4c4c4"/></svg>
<svg class="a" style="left:0px;top:674px;" width="876" height="344" viewBox="0 674 876 344"><rect x="0" y="674" width="876" height="344" fill="#6b635e"/><path d="M92.5 674 L181 674 L0 993 V799Z" fill="#f1f1f0"/><path d="M249 674 H566 L656 1018 H112Z" fill="#f3f3f2"/><path d="M611 674 H698.3 L876 995 V1018 H736.5Z" fill="#f3f3f3"/><defs><clipPath id="cf"><path d="M249 674 H566 L656 1018 H112Z"/></clipPath><clipPath id="cr"><path d="M611 674 H698.3 L876 995 V1018 H736.5Z"/></clipPath><clipPath id="cl"><path d="M92.5 674 L181 674 L0 993 V799Z"/></clipPath><clipPath id="cw"><path d="M181 674 H249 L112 1018 H0 V993Z"/></clipPath><clipPath id="crw"><path d="M566 674 H611 L736.5 1018 H656Z"/></clipPath></defs><g clip-path="url(#cf)"><path d="M0 713.06H876M0 780.59H876M0 867.56H876M0 983.75H876M206.9 674L45.88 1018M283.9 674L176.07 1018M360.9 674L306.26 1018M437.9 674L436.45 1018M514.9 674L566.64 1018M591.9 674L696.83 1018M668.9 674L827.02 1018M745.9 674L957.2 1018" stroke="#e4e4e3" stroke-width="1" fill="none"/><path d="M0 684.65H876M0 744.83H876M0 821.16H876M0 921.16H876M168.4 674L-19.21 1018M245.4 674L110.98 1018M322.4 674L241.17 1018M399.4 674L371.36 1018M476.4 674L501.54 1018M553.4 674L631.73 1018M630.4 674L761.92 1018M707.4 674L892.11 1018" stroke="#b0b0b0" stroke-width="1.6" fill="none"/><path d="M201.92 682.32V686.97M280.56 682.32V686.97M359.21 682.32V686.97M437.86 682.32V686.97M516.5 682.32V686.97M595.15 682.32V686.97M673.79 682.32V686.97M173.75 742.23V747.43M261.7 742.23V747.43M349.65 742.23V747.43M437.6 742.23V747.43M525.55 742.23V747.43M613.5 742.23V747.43M701.46 742.23V747.43" stroke="#a9a9a9" stroke-width="1" fill="none"/><path d="M138.02 818.21V824.11M237.77 818.21V824.11M337.53 818.21V824.11M437.28 818.21V824.11M537.03 818.21V824.11M636.79 818.21V824.11M736.54 818.21V824.11M91.21 917.75V924.56M206.43 917.75V924.56M321.64 917.75V924.56M436.86 917.75V924.56M552.07 917.75V924.56M667.29 917.75V924.56M782.5 917.75V924.56M144.07 713.06H150.13M106.85 780.59H113.68M58.93 867.56H66.74M227.11 713.06H233.17M200.34 780.59H207.16M165.86 867.56H173.66M310.15 713.06H316.21M293.82 780.59H300.64M272.79 867.56H280.59M393.19 713.06H399.25M387.3 780.59H394.12M379.72 867.56H387.52M476.23 713.06H482.28M480.78 780.59H487.6M486.65 867.56H494.45M559.26 713.06H565.32M574.26 780.59H581.08M593.58 867.56H601.38M642.3 713.06H648.36M667.74 780.59H674.57M700.5 867.56H708.31M725.34 713.06H731.4M761.23 780.59H768.05M807.43 867.56H815.23" stroke="#a9a9a9" stroke-width="1.5" fill="none"/><path d="M-5.09 983.75H4.02M119.8 983.75H128.92M244.7 983.75H253.81M369.59 983.75H378.7M494.48 983.75H503.6M619.38 983.75H628.49M744.27 983.75H753.39M869.17 983.75H878.28" stroke="#a9a9a9" stroke-width="2" fill="none"/><path d="M159.05 684.65H166.13M170.46 684.65H174.78M177.54 684.65H181.86M189.33 684.65H197.98M205.85 684.65H214.5M221.97 684.65H226.3M229.05 684.65H233.37M237.7 684.65H244.78M249.1 684.65H253.43M256.18 684.65H260.51M267.98 684.65H276.63M284.49 684.65H293.15M300.62 684.65H304.94M307.7 684.65H312.02M316.35 684.65H323.42M327.75 684.65H332.08M334.83 684.65H339.15M346.63 684.65H355.28M363.14 684.65H371.79M379.26 684.65H383.59M386.34 684.65H390.67M394.99 684.65H402.07M406.4 684.65H410.72M413.47 684.65H417.8M425.27 684.65H433.92M441.79 684.65H450.44M457.91 684.65H462.24M464.99 684.65H469.31M473.64 684.65H480.72M485.04 684.65H489.37M492.12 684.65H496.45M503.92 684.65H512.57M520.43 684.65H529.08M536.56 684.65H540.88M543.63 684.65H547.96M552.29 684.65H559.36M563.69 684.65H568.01M570.77 684.65H575.09M582.56 684.65H591.22M599.08 684.65H607.73M615.2 684.65H619.53M622.28 684.65H626.61M630.93 684.65H638.01M642.34 684.65H646.66M649.41 684.65H653.74M661.21 684.65H669.86M677.73 684.65H686.38M693.85 684.65H698.17M700.93 684.65H705.25M169.6 671.8L168.06 674.62M167.07 676.44L165.5 679.32M163.91 682.24L161.27 687.08M159.63 690.09L157.97 693.13M156.9 695.08L155.21 698.18M152.24 703.63L148.73 710.07M145.45 716.07L141.77 722.83M138.51 728.8L136.59 732.32M135.36 734.58L133.4 738.18M246.26 671.8L245.16 674.62M244.45 676.44L243.32 679.32M242.18 682.24L240.29 687.08M239.11 690.09L237.93 693.13M237.16 695.08L235.95 698.18M233.82 703.63L231.3 710.07M228.96 716.07L226.32 722.83M223.98 728.8L222.61 732.32M221.73 734.58L220.32 738.18M322.92 671.8L322.25 674.62M321.82 676.44L321.14 679.32M320.45 682.24L319.31 687.08M318.6 690.09L317.88 693.13M317.42 695.08L316.69 698.18M315.4 703.63L313.88 710.07M312.46 716.07L310.87 722.83M309.46 728.8L308.63 732.32M308.09 734.58L307.25 738.18M399.58 671.8L399.35 674.62M399.2 676.44L398.97 679.32M398.73 682.24L398.33 687.08M398.09 690.09L397.84 693.13M397.68 695.08L397.43 698.18M396.98 703.63L396.46 710.07M395.97 716.07L395.42 722.83M394.93 728.8L394.65 732.32M394.46 734.58L394.17 738.18M476.24 671.8L476.45 674.62M476.58 676.44L476.79 679.32M477 682.24L477.36 687.08M477.58 690.09L477.8 693.13M477.94 695.08L478.17 698.18M478.57 703.63L479.04 710.07M479.48 716.07L479.97 722.83M480.41 728.8L480.66 732.32M480.83 734.58L481.09 738.18M552.9 671.8L553.54 674.62M553.96 676.44L554.61 679.32M555.28 682.24L556.38 687.08M557.06 690.09L557.76 693.13M558.2 695.08L558.91 698.18M560.15 703.63L561.61 710.07M562.98 716.07L564.52 722.83M565.88 728.8L566.68 732.32M567.2 734.58L568.01 738.18M629.56 671.8L630.64 674.62M631.33 676.44L632.43 679.32M633.55 682.24L635.4 687.08M636.55 690.09L637.71 693.13M638.46 695.08L639.65 698.18M641.73 703.63L644.19 710.07M646.49 716.07L649.07 722.83M651.35 728.8L652.7 732.32M653.56 734.58L654.94 738.18M706.22 671.8L707.73 674.62M708.71 676.44L710.26 679.32M711.82 682.24L714.42 687.08M716.04 690.09L717.67 693.13M718.72 695.08L720.38 698.18M723.31 703.63L726.77 710.07M729.99 716.07L733.62 722.83M736.83 728.8L738.72 732.32M739.93 734.58L741.86 738.18" stroke="#a9a9a9" stroke-width="2.5" fill="none"/><path d="M125.81 744.83H133.73M138.57 744.83H143.4M146.48 744.83H151.32M159.68 744.83H169.35M178.14 744.83H187.82M196.17 744.83H201.01M204.09 744.83H208.93M213.77 744.83H221.68M226.52 744.83H231.36M234.43 744.83H239.27M247.63 744.83H257.3M266.1 744.83H275.77M284.13 744.83H288.96M292.04 744.83H296.88M301.72 744.83H309.63M314.47 744.83H319.31M322.39 744.83H327.22M335.58 744.83H345.25M354.05 744.83H363.72M372.08 744.83H376.91M379.99 744.83H384.83M389.67 744.83H397.58M402.42 744.83H407.26M410.34 744.83H415.17M423.53 744.83H433.2M442 744.83H451.67M460.03 744.83H464.87M467.94 744.83H472.78M477.62 744.83H485.53M490.37 744.83H495.21M498.29 744.83H503.13M511.48 744.83H521.16M529.95 744.83H539.62M547.98 744.83H552.82M555.9 744.83H560.73M565.57 744.83H573.49M578.32 744.83H583.16M586.24 744.83H591.08M599.43 744.83H609.11M617.9 744.83H627.58M635.93 744.83H640.77M643.85 744.83H648.68M653.52 744.83H661.44M666.27 744.83H671.11M674.19 744.83H679.03M687.38 744.83H697.06M705.85 744.83H715.53M723.88 744.83H728.72M731.8 744.83H736.64M83.65 821.16H92.63M98.12 821.16H103.6M107.09 821.16H112.58M122.06 821.16H133.03M143.01 821.16H153.98M163.46 821.16H168.94M172.43 821.16H177.92M183.41 821.16H192.38M197.87 821.16H203.36M206.85 821.16H212.33M221.81 821.16H232.78M242.76 821.16H253.73M263.21 821.16H268.7M272.19 821.16H277.67M283.16 821.16H292.14M297.62 821.16H303.11M306.6 821.16H312.09M321.56 821.16H332.54M342.51 821.16H353.49M362.96 821.16H368.45M371.94 821.16H377.43M382.91 821.16H391.89M397.38 821.16H402.86M406.36 821.16H411.84M421.32 821.16H432.29M442.27 821.16H453.24M462.72 821.16H468.2M471.69 821.16H477.18M482.67 821.16H491.65M497.13 821.16H502.62M506.11 821.16H511.6M521.07 821.16H532.05M542.02 821.16H552.99M562.47 821.16H567.96M571.45 821.16H576.93M582.42 821.16H591.4M596.89 821.16H602.37M605.86 821.16H611.35M620.83 821.16H631.8M641.77 821.16H652.75M662.22 821.16H667.71M671.2 821.16H676.69M682.18 821.16H691.15M696.64 821.16H702.13M705.62 821.16H711.1M720.58 821.16H731.55M741.53 821.16H752.5M761.98 821.16H767.46M770.96 821.16H776.44M131.41 741.82L128.11 747.87M126.06 751.64L123.98 755.45M122.64 757.91L120.51 761.81M116.77 768.67L112.33 776.82M108.18 784.42L103.49 793.01M99.34 800.63L96.89 805.12M95.31 808.02L92.8 812.62M90.25 817.29L86 825.08M83.36 829.94L80.67 834.87M78.93 838.04L76.18 843.09M218.9 741.82L216.53 747.87M215.06 751.64L213.57 755.45M212.61 757.91L211.09 761.81M208.41 768.67L205.22 776.82M202.25 784.42L198.9 793.01M195.92 800.63L194.16 805.12M193.03 808.02L191.23 812.62M189.41 817.29L186.36 825.08M184.47 829.94L182.54 834.87M181.3 838.04L179.32 843.09M306.39 741.82L304.96 747.87M304.07 751.64L303.16 755.45M302.59 757.91L301.66 761.81M300.04 768.67L298.12 776.82M296.32 784.42L294.3 793.01M292.5 800.63L291.44 805.12M290.75 808.02L289.67 812.62M288.56 817.29L286.72 825.08M285.58 829.94L284.41 834.87M283.66 838.04L282.47 843.09M393.87 741.82L393.38 747.87M393.07 751.64L392.76 755.45M392.56 757.91L392.24 761.81M391.68 768.67L391.02 776.82M390.4 784.42L389.7 793.01M389.08 800.63L388.71 805.12M388.47 808.02L388.1 812.62M387.72 817.29L387.08 825.08M386.69 829.94L386.29 834.87M386.03 838.04L385.61 843.09M481.36 741.82L481.8 747.87M482.07 751.64L482.35 755.45M482.53 757.91L482.82 761.81M483.32 768.67L483.92 776.82M484.47 784.42L485.1 793.01M485.66 800.63L485.98 805.12M486.2 808.02L486.53 812.62M486.87 817.29L487.44 825.08M487.8 829.94L488.16 834.87M488.39 838.04L488.76 843.09M568.84 741.82L570.22 747.87M571.08 751.64L571.95 755.45M572.51 757.91L573.4 761.81M574.96 768.67L576.81 776.82M578.54 784.42L580.5 793.01M582.23 800.63L583.26 805.12M583.92 808.02L584.96 812.62M586.03 817.29L587.8 825.08M588.91 829.94L590.03 834.87M590.75 838.04L591.9 843.09M656.33 741.82L658.64 747.87M660.08 751.64L661.54 755.45M662.48 757.91L663.97 761.81M666.6 768.67L669.71 776.82M672.62 784.42L675.9 793.01M678.81 800.63L680.53 805.12M681.64 808.02L683.4 812.62M685.18 817.29L688.16 825.08M690.02 829.94L691.9 834.87M693.12 838.04L695.05 843.09M743.81 741.82L747.07 747.87M749.09 751.64L751.14 755.45M752.46 757.91L754.55 761.81M758.23 768.67L762.61 776.82M766.69 784.42L771.3 793.01M775.39 800.63L777.8 805.12M779.36 808.02L781.83 812.62M784.34 817.29L788.52 825.08M791.13 829.94L793.78 834.87M795.48 838.04L798.19 843.09" stroke="#a9a9a9" stroke-width="3" fill="none"/><path d="M28.42 921.16H38.79M45.13 921.16H51.46M55.5 921.16H61.83M72.78 921.16H85.45M96.97 921.16H109.65M120.59 921.16H126.93M130.96 921.16H137.3M143.64 921.16H154.01M160.34 921.16H166.68M170.71 921.16H177.05M187.99 921.16H200.67M212.19 921.16H224.86M235.81 921.16H242.14M246.18 921.16H252.51M258.85 921.16H269.22M275.56 921.16H281.89M285.93 921.16H292.26M303.21 921.16H315.88M327.4 921.16H340.08M351.02 921.16H357.36M361.39 921.16H367.73M374.07 921.16H384.43M390.77 921.16H397.11M401.14 921.16H407.48M418.42 921.16H431.1M442.62 921.16H455.29M466.24 921.16H472.57M476.61 921.16H482.94M489.28 921.16H499.65M505.99 921.16H512.32M516.36 921.16H522.69M533.64 921.16H546.31M557.83 921.16H570.51M581.45 921.16H587.79M591.82 921.16H598.16M604.5 921.16H614.86M621.2 921.16H627.54M631.57 921.16H637.91M648.85 921.16H661.53M673.05 921.16H685.72M696.67 921.16H703M707.04 921.16H713.37M719.71 921.16H730.08M736.42 921.16H742.75M746.79 921.16H753.12M764.07 921.16H776.74M788.26 921.16H800.94M811.88 921.16H818.22M822.25 921.16H828.59M71.32 852L65.53 862.62M60.1 872.57L53.95 883.85M48.47 893.9L45.23 899.84M43.14 903.67L39.81 909.78M36.42 916L30.75 926.39M27.21 932.89L23.6 939.5M21.27 943.77L17.56 950.57M175.84 852L171.69 862.62M167.81 872.57L163.4 883.85M159.47 893.9L157.15 899.84M155.65 903.67L153.26 909.78M150.84 916L146.78 926.39M144.24 932.89L141.65 939.5M139.99 943.77L137.33 950.57M280.37 852L277.86 862.62M275.51 872.57L272.84 883.85M270.47 893.9L269.07 899.84M268.16 903.67L266.72 909.78M265.25 916L262.8 926.39M261.27 932.89L259.7 939.5M258.7 943.77L257.09 950.57M384.89 852L384.02 862.62M383.21 872.57L382.29 883.85M381.47 893.9L380.99 899.84M380.68 903.67L380.18 909.78M379.67 916L378.82 926.39M378.29 932.89L377.75 939.5M377.41 943.77L376.85 950.57M489.41 852L490.19 862.62M490.91 872.57L491.74 883.85M492.47 893.9L492.91 899.84M493.19 903.67L493.63 909.78M494.09 916L494.85 926.39M495.32 932.89L495.81 939.5M496.12 943.77L496.62 950.57M593.93 852L596.35 862.62M598.62 872.57L601.19 883.85M603.47 893.9L604.83 899.84M605.7 903.67L607.09 909.78M608.5 916L610.87 926.39M612.35 932.89L613.86 939.5M614.83 943.77L616.38 950.57M698.46 852L702.52 862.62M706.32 872.57L710.63 883.85M714.47 893.9L716.75 899.84M718.21 903.67L720.55 909.78M722.92 916L726.9 926.39M729.38 932.89L731.91 939.5M733.54 943.77L736.14 950.57M802.98 852L808.68 862.62M814.02 872.57L820.08 883.85M825.47 893.9L828.66 899.84M830.72 903.67L834 909.78M837.34 916L842.92 926.39M846.41 932.89L849.96 939.5M852.25 943.77L855.9 950.57" stroke="#a9a9a9" stroke-width="3.5" fill="none"/><path d="M11 962.61L3.14 977.03M-4.27 990.6L-12.7 1006.07M-20.25 1019.91L-24.74 1028.14M132.62 962.61L126.99 977.03M121.69 990.6L115.64 1006.07M110.23 1019.91L107.02 1028.14M254.25 962.61L250.84 977.03M247.64 990.6L243.98 1006.07M240.72 1019.91L238.77 1028.14M375.87 962.61L374.7 977.03M373.59 990.6L372.33 1006.07M371.2 1019.91L370.53 1028.14M497.5 962.61L498.55 977.03M499.54 990.6L500.67 1006.07M501.68 1019.91L502.28 1028.14M619.12 962.61L622.4 977.03M625.49 990.6L629.02 1006.07M632.17 1019.91L634.04 1028.14M740.74 962.61L746.26 977.03M751.44 990.6L757.36 1006.07M762.65 1019.91L765.8 1028.14M862.37 962.61L870.11 977.03M877.4 990.6L885.7 1006.07M893.14 1019.91L897.55 1028.14" stroke="#a9a9a9" stroke-width="4" fill="none"/><text x="165.33" y="682.46" font-size="3.55" font-style="italic" font-weight="bold" fill="#b9b9b9" letter-spacing="0.3">1METER</text><text x="243.97" y="682.46" font-size="3.55" font-style="italic" font-weight="bold" fill="#b9b9b9" letter-spacing="0.3">1METER</text><text x="322.62" y="682.46" font-size="3.55" font-style="italic" font-weight="bold" fill="#b9b9b9" letter-spacing="0.3">1METER</text><text x="401.26" y="682.46" font-size="3.55" font-style="italic" font-weight="bold" fill="#b9b9b9" letter-spacing="0.3">1METER</text><text x="479.91" y="682.46" font-size="3.55" font-style="italic" font-weight="bold" fill="#b9b9b9" letter-spacing="0.3">1METER</text><text x="558.56" y="682.46" font-size="3.55" font-style="italic" font-weight="bold" fill="#b9b9b9" letter-spacing="0.3">1METER</text><text x="637.2" y="682.46" font-size="3.55" font-style="italic" font-weight="bold" fill="#b9b9b9" letter-spacing="0.3">1METER</text><text x="715.85" y="682.46" font-size="3.55" font-style="italic" font-weight="bold" fill="#b9b9b9" letter-spacing="0.3">1METER</text><text x="132.83" y="742.38" font-size="3.97" font-style="italic" font-weight="bold" fill="#b9b9b9" letter-spacing="0.3">1METER</text><text x="220.78" y="742.38" font-size="3.97" font-style="italic" font-weight="bold" fill="#b9b9b9" letter-spacing="0.3">1METER</text><text x="308.73" y="742.38" font-size="3.97" font-style="italic" font-weight="bold" fill="#b9b9b9" letter-spacing="0.3">1METER</text><text x="396.68" y="742.38" font-size="3.97" font-style="italic" font-weight="bold" fill="#b9b9b9" letter-spacing="0.3">1METER</text><text x="484.63" y="742.38" font-size="3.97" font-style="italic" font-weight="bold" fill="#b9b9b9" letter-spacing="0.3">1METER</text><text x="572.58" y="742.38" font-size="3.97" font-style="italic" font-weight="bold" fill="#b9b9b9" letter-spacing="0.3">1METER</text><text x="660.54" y="742.38" font-size="3.97" font-style="italic" font-weight="bold" fill="#b9b9b9" letter-spacing="0.3">1METER</text><text x="748.49" y="742.38" font-size="3.97" font-style="italic" font-weight="bold" fill="#b9b9b9" letter-spacing="0.3">1METER</text><text x="91.61" y="818.39" font-size="4.51" font-style="italic" font-weight="bold" fill="#b9b9b9" letter-spacing="0.3">1METER</text><text x="191.36" y="818.39" font-size="4.51" font-style="italic" font-weight="bold" fill="#b9b9b9" letter-spacing="0.3">1METER</text><text x="291.11" y="818.39" font-size="4.51" font-style="italic" font-weight="bold" fill="#b9b9b9" letter-spacing="0.3">1METER</text><text x="390.87" y="818.39" font-size="4.51" font-style="italic" font-weight="bold" fill="#b9b9b9" letter-spacing="0.3">1METER</text><text x="490.62" y="818.39" font-size="4.51" font-style="italic" font-weight="bold" fill="#b9b9b9" letter-spacing="0.3">1METER</text><text x="590.38" y="818.39" font-size="4.51" font-style="italic" font-weight="bold" fill="#b9b9b9" letter-spacing="0.3">1METER</text><text x="690.13" y="818.39" font-size="4.51" font-style="italic" font-weight="bold" fill="#b9b9b9" letter-spacing="0.3">1METER</text><text x="789.88" y="818.39" font-size="4.51" font-style="italic" font-weight="bold" fill="#b9b9b9" letter-spacing="0.3">1METER</text><text x="37.61" y="917.95" font-size="5.2" font-style="italic" font-weight="bold" fill="#b9b9b9" letter-spacing="0.3">1METER</text><text x="152.82" y="917.95" font-size="5.2" font-style="italic" font-weight="bold" fill="#b9b9b9" letter-spacing="0.3">1METER</text><text x="268.04" y="917.95" font-size="5.2" font-style="italic" font-weight="bold" fill="#b9b9b9" letter-spacing="0.3">1METER</text><text x="383.25" y="917.95" font-size="5.2" font-style="italic" font-weight="bold" fill="#b9b9b9" letter-spacing="0.3">1METER</text><text x="498.47" y="917.95" font-size="5.2" font-style="italic" font-weight="bold" fill="#b9b9b9" letter-spacing="0.3">1METER</text><text x="613.68" y="917.95" font-size="5.2" font-style="italic" font-weight="bold" fill="#b9b9b9" letter-spacing="0.3">1METER</text><text x="728.9" y="917.95" font-size="5.2" font-style="italic" font-weight="bold" fill="#b9b9b9" letter-spacing="0.3">1METER</text><text x="844.11" y="917.95" font-size="5.2" font-style="italic" font-weight="bold" fill="#b9b9b9" letter-spacing="0.3">1METER</text></g><path d="M543.5 674 H566 L656 1018 H634.5 L613.5 984Z" fill="#5e80b0" fill-opacity="0.93"/><g clip-path="url(#cf)"><clipPath id="cs"><path d="M543.5 674 H566 L656 1018 H634.5 L613.5 984Z"/></clipPath><g clip-path="url(#cs)"><path d="M530 684.65H660M530 744.83H660M530 821.16H660M530 921.16H660M553.4 674L631.73 1018" stroke="#44597a" stroke-width="2.2" fill="none"/></g></g><path d="M566 674 H611 L736.5 1018 H656Z" fill="#7b8695"/><g clip-path="url(#crw)"><path d="M577.25 674L676.12 1018M588.5 674L696.25 1018M599.75 674L716.38 1018M561.73 657.7L618.17 507.98M564.4 667.88L623.56 519.22M567.18 678.51L629.3 531.07M570.08 689.61L635.45 543.57M573.12 701.21L642.04 556.82M576.29 713.35L649.12 570.88M579.62 726.06L656.75 585.87M583.1 739.38L664.97 601.91M586.76 753.37L673.86 619.15M590.61 768.07L683.46 637.77M594.65 783.53L693.85 657.99M598.92 799.83L705.04 680.09M603.42 817.03L717.06 704.39M608.17 835.2L729.82 731.27M613.2 854.43L743.19 761.14M618.53 874.81L756.86 794.41M624.2 896.46L770.37 831.4M630.22 919.49L783.08 872.23M636.64 944.05L794.29 916.69M643.51 970.28L803.39 964.19M650.85 998.37L810.11 1013.83M658.74 1028.51L814.6 1064.67M667.23 1060.96L817.45 1116.04" stroke="#5f6a79" stroke-width="1.1" fill="none"/></g><g clip-path="url(#cr)"><path d="M600 689.35H876M600 704.6H876M600 720.78H876M600 737.99H876M600 756.32H876M600 775.88H876M600 796.81H876M600 819.25H876M600 843.38H876M600 869.39H876M600 897.5H876M600 927.99H876M600 961.18H876M600 997.42H876M600 1037.18H876M600 1080.98H876M632.83 674L775.5 1018M654.65 674L813 1018M676.47 674L850.5 1018" stroke="#9c9c9c" stroke-width="1" fill="none"/></g><g clip-path="url(#cl)"><path d="M0 678.95H260M0 693.35H260M0 708.6H260M0 724.78H260M0 741.99H260M0 760.32H260M0 779.88H260M0 800.81H260M0 823.25H260M0 847.38H260M0 873.39H260M0 901.5H260M0 931.99H260M0 965.18H260M0 1001.42H260M0 1041.18H260M0 1084.98H260M0 1133.47H260M0 1187.46H260M-84.5 674L-446.81 1018M-62.38 674L-409.4 1018M-40.25 674L-371.99 1018M-18.12 674L-334.58 1018M4 674L-297.17 1018M26.12 674L-259.76 1018M48.25 674L-222.36 1018M70.38 674L-184.95 1018M92.5 674L-147.54 1018M114.62 674L-110.13 1018M136.75 674L-72.72 1018M158.88 674L-35.32 1018M181 674L2.09 1018" stroke="#b4b4b4" stroke-width="1" fill="none"/></g><path d="M181 674 H249 L112 1018 H0 V993Z" fill="#bcc2c9"/><path d="M178 674 H186.5 L0 1003 V989Z" fill="#aab0b7"/><g clip-path="url(#cw)"><path d="M198 674L-43.25 1018M215 674L8.5 1018M232 674L60.25 1018M254.58 660.03L123.08 435.73M250.47 670.32L113.59 449.26M246.18 681.05L103.56 463.66M241.71 692.26L92.97 479.01M237.02 703.98L81.77 495.42M232.13 716.25L69.95 513.02M226.99 729.1L57.49 531.95M221.61 742.57L44.36 552.36M215.96 756.72L30.57 574.43M210.02 771.59L16.15 598.35M203.77 787.25L1.15 624.32M197.18 803.75L-14.35 652.57M190.22 821.16L-30.21 683.3M182.87 839.57L-46.26 716.69M175.09 859.06L-62.25 752.9M166.83 879.73L-77.92 792M158.06 901.69L-92.97 833.98M148.73 925.06L-107.11 878.73M138.77 949.99L-120.12 926M128.13 976.64L-131.87 975.51M116.72 1005.19L-142.37 1026.91M104.48 1035.85L-151.76 1079.89M91.29 1068.86L-160.35 1134.24" stroke="#8d939a" stroke-width="1" fill="none"/></g></svg>
<div class="a" style="left:15px;top:704px;width:200px;height:199.7px;background:rgba(58,58,58,0.42);"></div>
<div class="a" style="left:36.3px;top:720.5px;width:157px;height:26.7px;background:#f5f5f5;border-radius:3px;"></div>
<div class="a" style="left:36.3px;top:768px;width:157px;height:26.4px;background:#f5f5f5;border-radius:3px;"></div>
<div class="a t" style="left:90.34px;top:720px;font-size:24px;line-height:28px;color:#323232;">Host</div>
<div class="a t" style="left:84.34px;top:767.5px;font-size:24px;line-height:28px;color:#323232;">Client</div>
<div class="a t" style="left:62.66px;top:823.5px;font-size:24px;line-height:28px;color:#ffffff;">Players: 0</div>
<div class="a" style="left:878px;top:73px;width:612px;height:19px;background:#282828;border-radius:3px 3px 0 0;"></div>
<div class="a" style="left:878px;top:73px;width:96px;height:19px;background:#3c3c3c;border-radius:3px 3px 0 0;"></div>
<svg class="a" style="left:886px;top:78px;" width="10" height="9" viewBox="0 0 10 9"><path d="M0.5 1H2M3.5 1H9.8M2.5 4.5H4M5.5 4.5H9.8M2.5 8H4M5.5 8H9.8" stroke="#c8c8c8" stroke-width="1.3" fill="none"/></svg>
<div class="a t" style="left:902.5px;top:75px;font-size:12px;line-height:16px;letter-spacing:0.3px;">Hierarchy</div>
<svg class="a" style="left:1455.5px;top:76.8px;" width="9" height="10" viewBox="0 0 9 10"><path d="M1 5.5H8V9.3H1Z" fill="none" stroke="#c4c4c4" stroke-width="1.1"/><path d="M2.6 5.3V3A2.1 2.1 0 0 1 6.8 3" fill="none" stroke="#c4c4c4" stroke-width="1.1"/></svg>
<svg class="a" style="left:1477px;top:77px;" width="2" height="10" viewBox="0 0 2 10"><rect x="0" y="0" width="2" height="2" fill="#c4c4c4"/><rect x="0" y="4" width="2" height="2" fill="#c4c4c4"/><rect x="0" y="8" width="2" height="2" fill="#c4c4c4"/></svg>
<div class="a" style="left:878px;top:92px;width:612px;height:20px;background:#3c3c3c;"></div>
<svg class="a" style="left:885px;top:96px;" width="12" height="12" viewBox="0 0 12 12"><path d="M6 0.5V11.5M0.5 6H11.5" stroke="#d0d0d0" stroke-width="1.7"/></svg>
<svg class="a" style="left:901px;top:100px;" width="8" height="4.5" viewBox="0 0 8 4.5"><path d="M0 0H8 L4 4.5Z" fill="#c4c4c4"/></svg>
<div class="a" style="left:1161.5px;top:94px;width:325px;height:16px;background:#2a2a2a;border:1px solid #212121;border-top-color:#111;border-radius:3px;box-sizing:border-box;"></div>
<svg class="a" style="left:1166px;top:97.5px;" width="12" height="9" viewBox="0 0 12 9"><circle cx="3.5" cy="3.5" r="2.6" fill="none" stroke="#b8b8b8" stroke-width="1.1"/><path d="M5.4 5.4 L8 8" stroke="#b8b8b8" stroke-width="1.2"/><path d="M8.2 3H11.4L9.8 5Z" fill="#b8b8b8"/></svg>
<div class="a t" style="left:1180.5px;top:94px;font-size:12px;line-height:16px;letter-spacing:-0.91px;color:#767676;">All</div>
<div class="a" style="left:1469px;top:95px;width:16.5px;height:14px;background:#383838;border-radius:0 2px 2px 0;"></div>
<svg class="a" style="left:1471.5px;top:95.5px;" width="13" height="13" viewBox="0 0 13 13"><path d="M3.5 2.5 A1.5 1.5 0 0 1 5 1H10.5A1.5 1.5 0 0 1 12 2.5V8A1.5 1.5 0 0 1 10.5 9.5H7" fill="none" stroke="#c4c4c4" stroke-width="1"/><rect x="1" y="8.3" width="3.8" height="3.8" fill="none" stroke="#c4c4c4" stroke-width="1"/><path d="M5.5 7.5 L10 3 M7 3H10V6" fill="none" stroke="#c4c4c4" stroke-width="1"/></svg>
<div class="a" style="left:878px;top:112px;width:612px;height:1px;background:#232323;"></div>
<div class="a" style="left:878px;top:113px;width:612px;height:25px;background:#414141;"></div>
<svg class="a" style="left:883px;top:119.5px;" width="8" height="12" viewBox="0 0 8 12"><path d="M6 1.5 L1.5 6 L6 10.5" fill="none" stroke="#8a8a8a" stroke-width="1.2"/></svg>
<svg class="a" style="left:1154.5px;top:118px;" width="14" height="14" viewBox="0 0 16 16"><path d="M8 1 L14.5 4.6 V11.6 L8 15.2 L1.5 11.6 V4.6Z" fill="#7bd0f8"/><path d="M8 1 L14.5 4.6 L8 8.2 L1.5 4.6Z" fill="#c1ecff"/><path d="M1.5 4.6 L8 8.2 V15.2 L1.5 11.6Z" fill="#7bd0f8"/><path d="M8 8.2 L14.5 4.6 V11.6 L8 15.2Z" fill="#55b9ea"/><path d="M1.5 4.6 L8 8.2 L14.5 4.6 M8 8.2V15.2" stroke="#e9f8ff" stroke-width="0.7" fill="none"/></svg>
<div class="a t" style="left:1171px;top:117.5px;font-size:12.5px;line-height:16px;letter-spacing:0.39px;font-weight:bold;">Player</div>
<svg class="a" style="left:1477px;top:121.5px;" width="2" height="10" viewBox="0 0 2 10"><rect x="0" y="0" width="2" height="2" fill="#c4c4c4"/><rect x="0" y="4" width="2" height="2" fill="#c4c4c4"/><rect x="0" y="8" width="2" height="2" fill="#c4c4c4"/></svg>
<div class="a" style="left:878px;top:138px;width:612px;height:494px;background:#383838;"></div>
<div class="a" style="left:878px;top:138px;width:32px;height:494px;background:#3f3f3f;"></div>
<div class="a" style="left:878px;top:202px;width:612px;height:16px;background:#4d4d4d;"></div>
<div class="a" style="left:878px;top:202px;width:32px;height:16px;background:#525252;"></div>
<svg class="a" style="left:927px;top:142px;" width="9" height="8" viewBox="0 0 9 8"><path d="M0.3 0.5H8.7L4.5 7.5Z" fill="#7d7d7d"/></svg>
<svg class="a" style="left:938.5px;top:139px;" width="14.5" height="14.5" viewBox="0 0 16 16"><path d="M8 1.2 L14.3 4.7 V11.5 L8 15 L1.7 11.5 V4.7Z M1.7 4.7 L8 8.2 L14.3 4.7 M8 8.2V15" fill="none" stroke="#c8c8c8" stroke-width="1.25" stroke-linejoin="round"/></svg>
<div class="a t" style="left:956.3px;top:138px;font-size:12px;line-height:16px;letter-spacing:0.2px;">Player</div>
<svg class="a" style="left:952.3px;top:155px;" width="14.5" height="14.5" viewBox="0 0 16 16"><path d="M8 1.2 L14.3 4.7 V11.5 L8 15 L1.7 11.5 V4.7Z M1.7 4.7 L8 8.2 L14.3 4.7 M8 8.2V15" fill="none" stroke="#c8c8c8" stroke-width="1.25" stroke-linejoin="round"/></svg>
<div class="a t" style="left:970.3px;top:154px;font-size:12px;line-height:16px;letter-spacing:0.34px;">Visor</div>
<svg class="a" style="left:952.3px;top:171px;" width="14.5" height="14.5" viewBox="0 0 16 16"><path d="M8 1.2 L14.3 4.7 V11.5 L8 15 L1.7 11.5 V4.7Z M1.7 4.7 L8 8.2 L14.3 4.7 M8 8.2V15" fill="none" stroke="#c8c8c8" stroke-width="1.25" stroke-linejoin="round"/></svg>
<div class="a t" style="left:970.3px;top:170px;font-size:12px;line-height:16px;letter-spacing:0.16px;">Gun</div>
<svg class="a" style="left:952.3px;top:187px;" width="14.5" height="14.5" viewBox="0 0 16 16"><path d="M8 1.2 L14.3 4.7 V11.5 L8 15 L1.7 11.5 V4.7Z M1.7 4.7 L8 8.2 L14.3 4.7 M8 8.2V15" fill="none" stroke="#c8c8c8" stroke-width="1.25" stroke-linejoin="round"/></svg>
<div class="a t" style="left:970.3px;top:186px;font-size:12px;line-height:16px;letter-spacing:0.27px;">Bullet Spawn</div>
<svg class="a" style="left:952.3px;top:203px;" width="14.5" height="14.5" viewBox="0 0 16 16"><path d="M8 1.2 L14.3 4.7 V11.5 L8 15 L1.7 11.5 V4.7Z M1.7 4.7 L8 8.2 L14.3 4.7 M8 8.2V15" fill="none" stroke="#c8c8c8" stroke-width="1.25" stroke-linejoin="round"/></svg>
<div class="a t" style="left:970.3px;top:202px;font-size:12px;line-height:16px;">PlayerHUD</div>
<div class="a" style="left:878px;top:634px;width:612px;height:19px;background:#282828;border-radius:3px 3px 0 0;"></div>
<div class="a" style="left:878px;top:634px;width:81px;height:19px;background:#3c3c3c;border-radius:3px 3px 0 0;"></div>
<svg class="a" style="left:885.5px;top:639px;" width="12" height="10" viewBox="0 0 12 10"><path d="M0.5 0.5H4.6L5.8 2H11.5V9.5H0.5Z" fill="#c8c8c8"/></svg>
<div class="a t" style="left:902.5px;top:636px;font-size:12px;line-height:16px;letter-spacing:0.36px;">Project</div>
<svg class="a" style="left:1455.5px;top:637.8px;" width="9" height="10" viewBox="0 0 9 10"><path d="M1 5.5H8V9.3H1Z" fill="none" stroke="#c4c4c4" stroke-width="1.1"/><path d="M2.6 5.3V3A2.1 2.1 0 0 1 6.8 3" fill="none" stroke="#c4c4c4" stroke-width="1.1"/></svg>
<svg class="a" style="left:1476.5px;top:638px;" width="2" height="10" viewBox="0 0 2 10"><rect x="0" y="0" width="2" height="2" fill="#c4c4c4"/><rect x="0" y="4" width="2" height="2" fill="#c4c4c4"/><rect x="0" y="8" width="2" height="2" fill="#c4c4c4"/></svg>
<div class="a" style="left:878px;top:653px;width:612px;height:20px;background:#3c3c3c;"></div>
<svg class="a" style="left:885px;top:657px;" width="12" height="12" viewBox="0 0 12 12"><path d="M6 0.5V11.5M0.5 6H11.5" stroke="#d0d0d0" stroke-width="1.7"/></svg>
<svg class="a" style="left:901px;top:661px;" width="8" height="4.5" viewBox="0 0 8 4.5"><path d="M0 0H8 L4 4.5Z" fill="#c4c4c4"/></svg>
<div class="a" style="left:1024px;top:655px;width:318px;height:16px;background:#2a2a2a;border:1px solid #212121;border-top-color:#111;border-radius:3px;box-sizing:border-box;"></div>
<svg class="a" style="left:1029px;top:659px;" width="8" height="9" viewBox="0 0 8 9"><circle cx="3.2" cy="3.2" r="2.4" fill="none" stroke="#b8b8b8" stroke-width="1.1"/><path d="M5 5 L7.4 7.6" stroke="#b8b8b8" stroke-width="1.3"/></svg>
<div class="a" style="left:1324px;top:656px;width:17px;height:14px;background:#383838;border-radius:0 2px 2px 0;"></div>
<svg class="a" style="left:1326.5px;top:656.5px;" width="13" height="13" viewBox="0 0 13 13"><path d="M3.5 2.5 A1.5 1.5 0 0 1 5 1H10.5A1.5 1.5 0 0 1 12 2.5V8A1.5 1.5 0 0 1 10.5 9.5H7" fill="none" stroke="#c4c4c4" stroke-width="1"/><rect x="1" y="8.3" width="3.8" height="3.8" fill="none" stroke="#c4c4c4" stroke-width="1"/><path d="M5.5 7.5 L10 3 M7 3H10V6" fill="none" stroke="#c4c4c4" stroke-width="1"/></svg>
<div class="a" style="left:1344.5px;top:653px;width:1px;height:20px;background:#303030;"></div>
<div class="a" style="left:1370.5px;top:653px;width:1px;height:20px;background:#303030;"></div>
<div class="a" style="left:1396.3px;top:653px;width:1px;height:20px;background:#303030;"></div>
<div class="a" style="left:1422.4px;top:653px;width:1px;height:20px;background:#303030;"></div>
<div class="a" style="left:1448.2px;top:653px;width:1px;height:20px;background:#303030;"></div>
<svg class="a" style="left:1350px;top:656.5px;" width="13" height="13" viewBox="0 0 13 13"><rect x="2.5" y="0.3" width="5.3" height="5.3" fill="#c4c4c4"/><circle cx="3.7" cy="9.3" r="3.4" fill="#c4c4c4"/><path d="M9.5 3.5 L12.6 9.2 H6.6Z" fill="#c4c4c4"/></svg>
<svg class="a" style="left:1376px;top:657px;" width="13" height="12" viewBox="0 0 13 12"><path d="M6.5 1 H11.3 V5.8 L5.3 11.4 L0.8 6.8Z" fill="#c4c4c4"/><circle cx="9.2" cy="3.2" r="0.9" fill="#3c3c3c"/></svg>
<svg class="a" style="left:1401.5px;top:656.5px;" width="14" height="14" viewBox="0 0 14 14"><path d="M4.3 0.5H9.7L13.5 4.3V9.7L9.7 13.5H4.3L0.5 9.7V4.3Z" fill="#d2d2d2"/><path d="M6.3 3H7.7L7.5 8.5H6.5Z" fill="#3c3c3c"/><circle cx="7" cy="10.5" r="0.9" fill="#3c3c3c"/></svg>
<svg class="a" style="left:1428.5px;top:657px;" width="12" height="12" viewBox="0 0 12 12"><path d="M6 0.5 L7.6 4.4 L11.7 4.7 L8.5 7.4 L9.5 11.5 L6 9.2 L2.5 11.5 L3.5 7.4 L0.3 4.7 L4.4 4.4Z" fill="#8a8a8a"/></svg>
<svg class="a" style="left:1454.5px;top:657px;" width="15" height="12" viewBox="0 0 15 12"><path d="M1 6 C3 2.4 11.5 2.4 13.5 6 C11.5 9.6 3 9.6 1 6Z" fill="none" stroke="#b4b4b4" stroke-width="1.1"/><circle cx="7.3" cy="6" r="1.7" fill="#b4b4b4"/><path d="M2 11 L13 0.8" stroke="#b4b4b4" stroke-width="1.2"/></svg>
<div class="a t" style="left:1470.8px;top:655.5px;font-size:12px;line-height:16px;letter-spacing:0.38px;color:#b4b4b4;">29</div>
<div class="a" style="left:878px;top:673px;width:612px;height:1px;background:#232323;"></div>
<div class="a" style="left:878px;top:674px;width:208px;height:344px;background:#383838;"></div>
<div class="a" style="left:1086px;top:674px;width:1px;height:344px;background:#232323;"></div>
<div class="a" style="left:1087px;top:674px;width:403px;height:323px;background:#333333;"></div>
<div class="a" style="left:1087px;top:674px;width:403px;height:21px;background:#3f3f3f;"></div>
<div class="a" style="left:1087px;top:997px;width:403px;height:21px;background:#3c3c3c;"></div>
<div class="a" style="left:878px;top:801px;width:208px;height:16px;background:#4d4d4d;"></div>
<svg class="a" style="left:881.7px;top:677.5px;" width="9" height="8" viewBox="0 0 9 8"><path d="M0.3 0.5H8.7L4.5 7.5Z" fill="#6e6e6e"/></svg>
<svg class="a" style="left:896.5px;top:676px;" width="12" height="12" viewBox="0 0 12 12"><path d="M6 0.5 L7.6 4.4 L11.7 4.7 L8.5 7.4 L9.5 11.5 L6 9.2 L2.5 11.5 L3.5 7.4 L0.3 4.7 L4.4 4.4Z" fill="#c8c8c8"/></svg>
<div class="a t" style="left:913px;top:673.5px;font-size:12px;line-height:16px;letter-spacing:0.77px;font-weight:bold;">Favorites</div>
<svg class="a" style="left:910px;top:691.5px;" width="13" height="13" viewBox="0 0 13 13"><circle cx="5" cy="5" r="4" fill="none" stroke="#c8c8c8" stroke-width="1.1"/><path d="M7.8 7.8 L11.8 11.8" stroke="#c8c8c8" stroke-width="1.6"/></svg>
<div class="a t" style="left:926.3px;top:689.5px;font-size:12px;line-height:16px;letter-spacing:0.28px;">All Materials</div>
<svg class="a" style="left:910px;top:707.5px;" width="13" height="13" viewBox="0 0 13 13"><circle cx="5" cy="5" r="4" fill="none" stroke="#c8c8c8" stroke-width="1.1"/><path d="M7.8 7.8 L11.8 11.8" stroke="#c8c8c8" stroke-width="1.6"/></svg>
<div class="a t" style="left:926.3px;top:705.5px;font-size:12px;line-height:16px;letter-spacing:0.35px;">All Models</div>
<svg class="a" style="left:910px;top:723.5px;" width="13" height="13" viewBox="0 0 13 13"><circle cx="5" cy="5" r="4" fill="none" stroke="#c8c8c8" stroke-width="1.1"/><path d="M7.8 7.8 L11.8 11.8" stroke="#c8c8c8" stroke-width="1.6"/></svg>
<div class="a t" style="left:926.3px;top:721.5px;font-size:12px;line-height:16px;letter-spacing:0.3px;">All Prefabs</div>
<svg class="a" style="left:881.7px;top:756.5px;" width="9" height="8" viewBox="0 0 9 8"><path d="M0.3 0.5H8.7L4.5 7.5Z" fill="#6e6e6e"/></svg>
<svg class="a" style="left:895.8px;top:755.5px;" width="15" height="11" viewBox="0 0 15 11"><path d="M0.5 0.5H4.8L6 2H11.5V4" fill="none" stroke="#c8c8c8" stroke-width="1"/><path d="M0.5 1V10.5" stroke="#c8c8c8" stroke-width="1"/><path d="M0.6 10.5 L3.2 4.3 H14.6 L11.8 10.5Z" fill="#c8c8c8"/></svg>
<div class="a t" style="left:913px;top:752.5px;font-size:12px;line-height:16px;letter-spacing:0.73px;font-weight:bold;">Assets</div>
<svg class="a" style="left:910px;top:771.7px;" width="12.4" height="10.6" viewBox="0 0 12.4 10.6"><path d="M0.4 0.4H4.6L5.8 2.1H12V10.2H0.4Z" fill="#c8c8c8"/></svg>
<div class="a t" style="left:926.3px;top:769px;font-size:12px;line-height:16px;letter-spacing:0.36px;">Materials</div>
<svg class="a" style="left:896.6px;top:788.2px;" width="8" height="9" viewBox="0 0 8 9"><path d="M0.5 0.3V8.7L7.5 4.5Z" fill="#6e6e6e"/></svg>
<svg class="a" style="left:910px;top:787.7px;" width="12.4" height="10.6" viewBox="0 0 12.4 10.6"><path d="M0.4 0.4H4.6L5.8 2.1H12V10.2H0.4Z" fill="#c8c8c8"/></svg>
<div class="a t" style="left:926.3px;top:785px;font-size:12px;line-height:16px;letter-spacing:0.19px;">Plugins</div>
<svg class="a" style="left:910px;top:803.7px;" width="12.4" height="10.6" viewBox="0 0 12.4 10.6"><path d="M0.4 0.4H4.6L5.8 2.1H12V10.2H0.4Z" fill="#c8c8c8"/></svg>
<div class="a t" style="left:926.3px;top:801px;font-size:12px;line-height:16px;letter-spacing:0.33px;">Prefab</div>
<svg class="a" style="left:896.6px;top:820.2px;" width="8" height="9" viewBox="0 0 8 9"><path d="M0.5 0.3V8.7L7.5 4.5Z" fill="#6e6e6e"/></svg>
<svg class="a" style="left:910px;top:819.7px;" width="12.4" height="10.6" viewBox="0 0 12.4 10.6"><path d="M0.4 0.4H4.6L5.8 2.1H12V10.2H0.4Z" fill="#c8c8c8"/></svg>
<div class="a t" style="left:926.3px;top:817px;font-size:12px;line-height:16px;letter-spacing:0.22px;">Samples</div>
<svg class="a" style="left:910px;top:835.7px;" width="12.4" height="10.6" viewBox="0 0 12.4 10.6"><path d="M0.4 0.4H4.6L5.8 2.1H12V10.2H0.4Z" fill="#c8c8c8"/></svg>
<div class="a t" style="left:926.3px;top:833px;font-size:12px;line-height:16px;letter-spacing:0.3px;">Scenes</div>
<svg class="a" style="left:910px;top:851.7px;" width="12.4" height="10.6" viewBox="0 0 12.4 10.6"><path d="M0.4 0.4H4.6L5.8 2.1H12V10.2H0.4Z" fill="#c8c8c8"/></svg>
<div class="a t" style="left:926.3px;top:849px;font-size:12px;line-height:16px;letter-spacing:0.47px;">Scripts</div>
<svg class="a" style="left:896.6px;top:868.2px;" width="8" height="9" viewBox="0 0 8 9"><path d="M0.5 0.3V8.7L7.5 4.5Z" fill="#6e6e6e"/></svg>
<svg class="a" style="left:910px;top:867.7px;" width="12.4" height="10.6" viewBox="0 0 12.4 10.6"><path d="M0.4 0.4H4.6L5.8 2.1H12V10.2H0.4Z" fill="#c8c8c8"/></svg>
<div class="a t" style="left:926.3px;top:865px;font-size:12px;line-height:16px;letter-spacing:0.51px;">TextMesh Pro</div>
<svg class="a" style="left:882.3px;top:884.2px;" width="8" height="9" viewBox="0 0 8 9"><path d="M0.5 0.3V8.7L7.5 4.5Z" fill="#6e6e6e"/></svg>
<svg class="a" style="left:896px;top:883.7px;" width="12.4" height="10.6" viewBox="0 0 12.4 10.6"><path d="M0.4 0.4H4.6L5.8 2.1H12V10.2H0.4Z" fill="#c8c8c8"/></svg>
<div class="a t" style="left:913px;top:880.5px;font-size:12px;line-height:16px;letter-spacing:0.8px;font-weight:bold;">Packages</div>
<div class="a t" style="left:1091.3px;top:675.8px;font-size:12px;line-height:16px;letter-spacing:0.38px;color:#b0b0b0;">Assets</div>
<svg class="a" style="left:1136.5px;top:680px;" width="6" height="10" viewBox="0 0 6 10"><path d="M0.8 0.8 L5 5 L0.8 9.2" fill="none" stroke="#b0b0b0" stroke-width="1.1"/></svg>
<div class="a t" style="left:1148px;top:675.8px;font-size:12px;line-height:16px;letter-spacing:0.74px;color:#c8c8c8;font-weight:bold;">Prefab</div>
<svg class="a" style="left:1103.5px;top:696px;" width="14" height="14" viewBox="0 0 16 16"><path d="M8 1 L14.5 4.6 V11.6 L8 15.2 L1.5 11.6 V4.6Z" fill="#7bd0f8"/><path d="M8 1 L14.5 4.6 L8 8.2 L1.5 4.6Z" fill="#c1ecff"/><path d="M1.5 4.6 L8 8.2 V15.2 L1.5 11.6Z" fill="#7bd0f8"/><path d="M8 8.2 L14.5 4.6 V11.6 L8 15.2Z" fill="#55b9ea"/><path d="M1.5 4.6 L8 8.2 L14.5 4.6 M8 8.2V15.2" stroke="#e9f8ff" stroke-width="0.7" fill="none"/></svg>
<div class="a t" style="left:1121.3px;top:695px;font-size:12px;line-height:16px;letter-spacing:0.7px;">Bullet</div>
<svg class="a" style="left:1103.5px;top:712px;" width="14" height="14" viewBox="0 0 16 16"><path d="M8 1 L14.5 4.6 V11.6 L8 15.2 L1.5 11.6 V4.6Z" fill="#7bd0f8"/><path d="M8 1 L14.5 4.6 L8 8.2 L1.5 4.6Z" fill="#c1ecff"/><path d="M1.5 4.6 L8 8.2 V15.2 L1.5 11.6Z" fill="#7bd0f8"/><path d="M8 8.2 L14.5 4.6 V11.6 L8 15.2Z" fill="#55b9ea"/><path d="M1.5 4.6 L8 8.2 L14.5 4.6 M8 8.2V15.2" stroke="#e9f8ff" stroke-width="0.7" fill="none"/></svg>
<div class="a t" style="left:1121.3px;top:711.5px;font-size:12px;line-height:16px;letter-spacing:0.7px;">Player</div>
<div class="a" style="left:1424px;top:1007px;width:50px;height:1.5px;background:#5e5e5e;"></div>
<div class="a" style="left:1418.5px;top:1002.5px;width:10px;height:10px;background:#999;border-radius:5px;"></div>
<div class="a" style="left:1492px;top:73px;width:428px;height:19px;background:#282828;border-radius:3px 3px 0 0;"></div>
<div class="a" style="left:1492px;top:73px;width:95px;height:19px;background:#3c3c3c;border-radius:3px 3px 0 0;"></div>
<svg class="a" style="left:1501px;top:77px;" width="11" height="11" viewBox="0 0 11 11"><circle cx="5.5" cy="5.5" r="5.3" fill="#c8c8c8"/><path d="M4.6 4.6H6.3V8.7M4.4 8.7H7.4" stroke="#3c3c3c" stroke-width="1.2" fill="none"/><circle cx="5.6" cy="2.7" r="0.9" fill="#3c3c3c"/></svg>
<div class="a t" style="left:1516.3px;top:75.05px;font-size:12px;line-height:16px;letter-spacing:0.44px;">Inspector</div>
<svg class="a" style="left:1884.5px;top:76.5px;" width="9" height="10" viewBox="0 0 9 10"><path d="M1 5.5H8V9.3H1Z" fill="none" stroke="#c4c4c4" stroke-width="1.1"/><path d="M2.6 5.3V3A2.1 2.1 0 0 1 6.8 3" fill="none" stroke="#c4c4c4" stroke-width="1.1"/></svg>
<svg class="a" style="left:1905px;top:77px;" width="2" height="10" viewBox="0 0 2 10"><rect x="0" y="0" width="2" height="2" fill="#c4c4c4"/><rect x="0" y="4" width="2" height="2" fill="#c4c4c4"/><rect x="0" y="8" width="2" height="2" fill="#c4c4c4"/></svg>
<div class="a" style="left:1492px;top:92px;width:428px;height:926px;background:#383838;"></div>
<div class="a" style="left:1492px;top:92px;width:428px;height:59px;background:#3c3c3c;"></div>
<svg class="a" style="left:1498.2px;top:101.8px;" width="22.3" height="22.3" viewBox="0 0 16 16"><path d="M8 1.2 L14.3 4.7 V11.5 L8 15 L1.7 11.5 V4.7Z M1.7 4.7 L8 8.2 L14.3 4.7 M8 8.2V15" fill="none" stroke="#c8c8c8" stroke-width="1.25" stroke-linejoin="round"/></svg>
<svg class="a" style="left:1518px;top:123px;" width="8" height="4.5" viewBox="0 0 8 4.5"><path d="M0 0H8 L4 4.5Z" fill="#c4c4c4"/></svg>
<div class="a" style="left:1540px;top:103px;width:14px;height:14px;background:#2a2a2a;border:1px solid #212121;border-top-color:#0d0d0d;border-radius:3px;box-sizing:border-box;"></div>
<svg class="a" style="left:1540px;top:103px;" width="14" height="14" viewBox="0 0 14 14"><path d="M3.2 7.2 L5.8 9.8 L10.8 4.4" fill="none" stroke="#e4e4e4" stroke-width="1.6"/></svg>
<div class="a" style="left:1560px;top:101.5px;width:278.5px;height:17.5px;background:#2a2a2a;border:1px solid #212121;border-top-color:#0d0d0d;border-radius:3px;box-sizing:border-box;"></div>
<div class="a t" style="left:1562.7px;top:102.05px;font-size:12px;line-height:16px;letter-spacing:0.87px;color:#e0e0e0;font-weight:bold;">PlayerHUD</div>
<div class="a" style="left:1842px;top:103px;width:14px;height:14px;background:#2a2a2a;border:1px solid #212121;border-top-color:#0d0d0d;border-radius:3px;box-sizing:border-box;"></div>
<div class="a t" style="left:1860px;top:102.05px;font-size:12px;line-height:16px;letter-spacing:0.5px;">Static</div>
<svg class="a" style="left:1906px;top:109px;" width="8" height="4.5" viewBox="0 0 8 4.5"><path d="M0 0H8 L4 4.5Z" fill="#c4c4c4"/></svg>
<div class="a t" style="left:1532.5px;top:126.05px;font-size:12px;line-height:16px;letter-spacing:0.74px;">Tag</div>
<div class="a" style="left:1559.1px;top:125.4px;width:157.8px;height:17.7px;background:#515151;border:1px solid #363636;border-radius:3px;box-sizing:border-box;"></div>
<div class="a t" style="left:1563.7px;top:126.2px;font-size:12px;line-height:16px;letter-spacing:0.3px;">Untagged</div>
<svg class="a" style="left:1703px;top:132px;" width="8" height="4.5" viewBox="0 0 8 4.5"><path d="M0 0H8 L4 4.5Z" fill="#c4c4c4"/></svg>
<div class="a t" style="left:1731.3px;top:126.05px;font-size:12px;line-height:16px;letter-spacing:0.3px;">Layer</div>
<div class="a" style="left:1770.2px;top:125.4px;width:145.7px;height:17.7px;background:#515151;border:1px solid #363636;border-radius:3px;box-sizing:border-box;"></div>
<div class="a t" style="left:1774.8px;top:126.2px;font-size:12px;line-height:16px;letter-spacing:0.3px;">Default</div>
<svg class="a" style="left:1902px;top:132px;" width="8" height="4.5" viewBox="0 0 8 4.5"><path d="M0 0H8 L4 4.5Z" fill="#c4c4c4"/></svg>
<div class="a" style="left:1492px;top:151px;width:428px;height:1px;background:#1a1a1a;"></div>
<div class="a" style="left:1492px;top:152px;width:428px;height:20.5px;background:#3e3e3e;"></div>
<svg class="a" style="left:1498px;top:158px;" width="9" height="9" viewBox="0 0 9 9"><path d="M0.3 0.5H8.7L4.5 8.5Z" fill="#7d7d7d"/></svg>
<div class="a t" style="left:1552px;top:153.95px;font-size:12px;line-height:16px;letter-spacing:0.81px;color:#d6d6d6;font-weight:bold;">Rect Transform</div>
<svg class="a" style="left:1861.5px;top:156.5px;" width="11" height="11" viewBox="0 0 11 11"><circle cx="5.5" cy="5.5" r="5.3" fill="#c4c4c4"/><path d="M3.9 4.3 A1.7 1.7 0 1 1 6.3 5.8 C5.7 6.2 5.5 6.4 5.5 7.2" fill="none" stroke="#3e3e3e" stroke-width="1.3"/><circle cx="5.5" cy="8.9" r="0.8" fill="#3e3e3e"/></svg>
<svg class="a" style="left:1881.5px;top:156.5px;" width="11" height="11" viewBox="0 0 11 11"><path d="M0.5 3H6.5M8.5 3H10.5M0.5 8H2.5M4.5 8H10.5M7.5 0.8V5.2M3.5 5.8V10.2" stroke="#c4c4c4" stroke-width="1.2" fill="none"/></svg>
<svg class="a" style="left:1906px;top:157px;" width="2" height="10" viewBox="0 0 2 10"><rect x="0" y="0" width="2" height="2" fill="#c4c4c4"/><rect x="0" y="4" width="2" height="2" fill="#c4c4c4"/><rect x="0" y="8" width="2" height="2" fill="#c4c4c4"/></svg>
<svg class="a" style="left:1513px;top:156px;" width="13.5" height="13.5" viewBox="0 0 13.5 13.5"><path d="M0.8 0.8 L5 2.2 L2.2 5Z M12.7 0.8 L11.3 5 L8.5 2.2Z M0.8 12.7 L2.2 8.5 L5 11.3Z M12.7 12.7 L8.5 11.3 L11.3 8.5Z" fill="#d8d8d8"/><path d="M3 3 L5.3 5.3 M10.5 3 L8.2 5.3 M3 10.5 L5.3 8.2 M10.5 10.5 L8.2 8.2" stroke="#d8d8d8" stroke-width="1.3"/></svg>
<div class="a t" style="left:1663.3px;top:180.05px;font-size:12px;line-height:16px;letter-spacing:-0.13px;">Pos X</div>
<div class="a t" style="left:1748.3px;top:180.05px;font-size:12px;line-height:16px;letter-spacing:-0.08px;">Pos Y</div>
<div class="a t" style="left:1834px;top:180.05px;font-size:12px;line-height:16px;letter-spacing:0.04px;">Pos Z</div>
<div class="a" style="left:1662.5px;top:197px;width:82px;height:18px;background:#2a2a2a;border:1px solid #212121;border-top-color:#0d0d0d;border-radius:3px;box-sizing:border-box;"></div>
<div class="a t" style="left:1665.5px;top:198.5px;font-size:12px;line-height:16px;letter-spacing:0.3px;">0</div>
<div class="a" style="left:1747.5px;top:197px;width:82px;height:18px;background:#2a2a2a;border:1px solid #212121;border-top-color:#0d0d0d;border-radius:3px;box-sizing:border-box;"></div>
<div class="a t" style="left:1750.5px;top:198.5px;font-size:12px;line-height:16px;letter-spacing:0.3px;">0</div>
<div class="a" style="left:1833px;top:197px;width:82.3px;height:18px;background:#2a2a2a;border:1px solid #212121;border-top-color:#0d0d0d;border-radius:3px;box-sizing:border-box;"></div>
<div class="a t" style="left:1836px;top:198.5px;font-size:12px;line-height:16px;letter-spacing:0.3px;">0</div>
<div class="a t" style="left:1663.3px;top:216.05px;font-size:12px;line-height:16px;letter-spacing:0.46px;">Width</div>
<div class="a t" style="left:1748.3px;top:216.05px;font-size:12px;line-height:16px;letter-spacing:0.46px;">Height</div>
<div class="a" style="left:1662.5px;top:232.7px;width:82px;height:18px;background:#2a2a2a;border:1px solid #212121;border-top-color:#0d0d0d;border-radius:3px;box-sizing:border-box;"></div>
<div class="a t" style="left:1665.5px;top:234.2px;font-size:12px;line-height:16px;letter-spacing:0.3px;">100</div>
<div class="a" style="left:1747.5px;top:232.7px;width:82px;height:18px;background:#2a2a2a;border:1px solid #212121;border-top-color:#0d0d0d;border-radius:3px;box-sizing:border-box;"></div>
<div class="a t" style="left:1750.5px;top:234.2px;font-size:12px;line-height:16px;letter-spacing:0.3px;">100</div>
<div class="a" style="left:1865px;top:232px;width:23px;height:18.5px;background:#585858;border-radius:2px 0 0 2px;"></div>
<div class="a" style="left:1889px;top:232px;width:26px;height:18.5px;background:#656565;border-radius:0 2px 2px 0;"></div>
<svg class="a" style="left:1871.5px;top:236px;" width="10" height="10" viewBox="0 0 10 10"><rect x="0.5" y="0.5" width="9" height="9" fill="none" stroke="#b0b0b0" stroke-width="1" stroke-dasharray="2.2 1.6"/></svg>
<div class="a t" style="left:1898.5px;top:233.55px;font-size:11px;line-height:16px;color:#b0b0b0;">R</div>
<svg class="a" style="left:1499px;top:258.5px;" width="9" height="9" viewBox="0 0 9 9"><path d="M0.3 0.5H8.7L4.5 8.5Z" fill="#7d7d7d"/></svg>
<div class="a t" style="left:1511.3px;top:254.55px;font-size:12px;line-height:16px;letter-spacing:0.41px;">Anchors</div>
<div class="a t" style="left:1526.7px;top:272.35px;font-size:12px;line-height:16px;letter-spacing:0.34px;">Min</div>
<div class="a t" style="left:1663.3px;top:272.35px;font-size:12px;line-height:16px;">X</div>
<div class="a" style="left:1674px;top:270.9px;width:70.5px;height:18px;background:#2a2a2a;border:1px solid #212121;border-top-color:#0d0d0d;border-radius:3px;box-sizing:border-box;"></div>
<div class="a t" style="left:1677px;top:272.4px;font-size:12px;line-height:16px;letter-spacing:0.3px;">0.5</div>
<div class="a t" style="left:1748.3px;top:272.35px;font-size:12px;line-height:16px;">Y</div>
<div class="a" style="left:1760px;top:270.9px;width:70.5px;height:18px;background:#2a2a2a;border:1px solid #212121;border-top-color:#0d0d0d;border-radius:3px;box-sizing:border-box;"></div>
<div class="a t" style="left:1763px;top:272.4px;font-size:12px;line-height:16px;letter-spacing:0.3px;">0.5</div>
<div class="a t" style="left:1526.7px;top:292.35px;font-size:12px;line-height:16px;letter-spacing:0.16px;">Max</div>
<div class="a t" style="left:1663.3px;top:292.35px;font-size:12px;line-height:16px;">X</div>
<div class="a" style="left:1674px;top:290.9px;width:70.5px;height:18px;background:#2a2a2a;border:1px solid #212121;border-top-color:#0d0d0d;border-radius:3px;box-sizing:border-box;"></div>
<div class="a t" style="left:1677px;top:292.4px;font-size:12px;line-height:16px;letter-spacing:0.3px;">0.5</div>
<div class="a t" style="left:1748.3px;top:292.35px;font-size:12px;line-height:16px;">Y</div>
<div class="a" style="left:1760px;top:290.9px;width:70.5px;height:18px;background:#2a2a2a;border:1px solid #212121;border-top-color:#0d0d0d;border-radius:3px;box-sizing:border-box;"></div>
<div class="a t" style="left:1763px;top:292.4px;font-size:12px;line-height:16px;letter-spacing:0.3px;">0.5</div>
<div class="a t" style="left:1511.3px;top:314.05px;font-size:12px;line-height:16px;letter-spacing:0.33px;">Pivot</div>
<div class="a t" style="left:1663.3px;top:314.05px;font-size:12px;line-height:16px;">X</div>
<div class="a" style="left:1674px;top:312.6px;width:70.5px;height:18px;background:#2a2a2a;border:1px solid #212121;border-top-color:#0d0d0d;border-radius:3px;box-sizing:border-box;"></div>
<div class="a t" style="left:1677px;top:314.1px;font-size:12px;line-height:16px;letter-spacing:0.3px;">0.5</div>
<div class="a t" style="left:1748.3px;top:314.05px;font-size:12px;line-height:16px;">Y</div>
<div class="a" style="left:1760px;top:312.6px;width:70.5px;height:18px;background:#2a2a2a;border:1px solid #212121;border-top-color:#0d0d0d;border-radius:3px;box-sizing:border-box;"></div>
<div class="a t" style="left:1763px;top:314.1px;font-size:12px;line-height:16px;letter-spacing:0.3px;">0.5</div>
<div class="a t" style="left:1511.3px;top:342.05px;font-size:12px;line-height:16px;letter-spacing:0.47px;">Rotation</div>
<div class="a t" style="left:1665.8px;top:342.05px;font-size:12px;line-height:16px;">X</div>
<div class="a" style="left:1681.3px;top:340.8px;width:64.2px;height:18px;background:#2a2a2a;border:1px solid #212121;border-top-color:#0d0d0d;border-radius:3px;box-sizing:border-box;"></div>
<div class="a t" style="left:1684.3px;top:342.3px;font-size:12px;line-height:16px;letter-spacing:0.3px;">0</div>
<div class="a t" style="left:1751.3px;top:342.05px;font-size:12px;line-height:16px;">Y</div>
<div class="a" style="left:1766.3px;top:340.8px;width:64.2px;height:18px;background:#2a2a2a;border:1px solid #212121;border-top-color:#0d0d0d;border-radius:3px;box-sizing:border-box;"></div>
<div class="a t" style="left:1769.3px;top:342.3px;font-size:12px;line-height:16px;letter-spacing:0.3px;">0</div>
<div class="a t" style="left:1836px;top:342.05px;font-size:12px;line-height:16px;">Z</div>
<div class="a" style="left:1851.3px;top:340.8px;width:64px;height:18px;background:#2a2a2a;border:1px solid #212121;border-top-color:#0d0d0d;border-radius:3px;box-sizing:border-box;"></div>
<div class="a t" style="left:1854.3px;top:342.3px;font-size:12px;line-height:16px;letter-spacing:0.3px;">0</div>
<div class="a t" style="left:1511.3px;top:362.05px;font-size:12px;line-height:16px;letter-spacing:0.12px;">Scale</div>
<div class="a t" style="left:1665.8px;top:362.05px;font-size:12px;line-height:16px;">X</div>
<div class="a" style="left:1681.3px;top:360.8px;width:64.2px;height:18px;background:#2a2a2a;border:1px solid #212121;border-top-color:#0d0d0d;border-radius:3px;box-sizing:border-box;"></div>
<div class="a t" style="left:1684.3px;top:362.3px;font-size:12px;line-height:16px;letter-spacing:0.3px;">1</div>
<div class="a t" style="left:1751.3px;top:362.05px;font-size:12px;line-height:16px;">Y</div>
<div class="a" style="left:1766.3px;top:360.8px;width:64.2px;height:18px;background:#2a2a2a;border:1px solid #212121;border-top-color:#0d0d0d;border-radius:3px;box-sizing:border-box;"></div>
<div class="a t" style="left:1769.3px;top:362.3px;font-size:12px;line-height:16px;letter-spacing:0.3px;">1</div>
<div class="a t" style="left:1836px;top:362.05px;font-size:12px;line-height:16px;">Z</div>
<div class="a" style="left:1851.3px;top:360.8px;width:64px;height:18px;background:#2a2a2a;border:1px solid #212121;border-top-color:#0d0d0d;border-radius:3px;box-sizing:border-box;"></div>
<div class="a t" style="left:1854.3px;top:362.3px;font-size:12px;line-height:16px;letter-spacing:0.3px;">1</div>
<svg class="a" style="left:1643.5px;top:365px;" width="13" height="10" viewBox="0 0 13 10"><path d="M5 2.6 H4 A2.4 2.4 0 0 0 4 7.4 H5 M8 2.6 H9 A2.4 2.4 0 0 1 9 7.4 H8" fill="none" stroke="#c4c4c4" stroke-width="1.1"/><path d="M1.5 0.8 L11.5 9.2" stroke="#c4c4c4" stroke-width="1.1"/></svg>
<div class="a" style="left:1492px;top:388px;width:428px;height:1px;background:#1a1a1a;"></div>
<div class="a" style="left:1492px;top:389px;width:428px;height:20.5px;background:#3e3e3e;"></div>
<svg class="a" style="left:1498px;top:395px;" width="9" height="9" viewBox="0 0 9 9"><path d="M0.3 0.5H8.7L4.5 8.5Z" fill="#7d7d7d"/></svg>
<div class="a" style="left:1532.5px;top:392px;width:13.5px;height:13.5px;background:#2a2a2a;border:1px solid #212121;border-top-color:#0d0d0d;border-radius:3px;box-sizing:border-box;"></div>
<svg class="a" style="left:1532.5px;top:392px;" width="13.5" height="13.5" viewBox="0 0 13.5 13.5"><path d="M3.2 7.2 L5.8 9.8 L10.8 4.4" fill="none" stroke="#e4e4e4" stroke-width="1.6"/></svg>
<div class="a t" style="left:1552px;top:390.95px;font-size:12px;line-height:16px;letter-spacing:0.8px;color:#d6d6d6;font-weight:bold;">Canvas</div>
<svg class="a" style="left:1861.5px;top:393.5px;" width="11" height="11" viewBox="0 0 11 11"><circle cx="5.5" cy="5.5" r="5.3" fill="#c4c4c4"/><path d="M3.9 4.3 A1.7 1.7 0 1 1 6.3 5.8 C5.7 6.2 5.5 6.4 5.5 7.2" fill="none" stroke="#3e3e3e" stroke-width="1.3"/><circle cx="5.5" cy="8.9" r="0.8" fill="#3e3e3e"/></svg>
<svg class="a" style="left:1881.5px;top:393.5px;" width="11" height="11" viewBox="0 0 11 11"><path d="M0.5 3H6.5M8.5 3H10.5M0.5 8H2.5M4.5 8H10.5M7.5 0.8V5.2M3.5 5.8V10.2" stroke="#c4c4c4" stroke-width="1.2" fill="none"/></svg>
<svg class="a" style="left:1906px;top:394px;" width="2" height="10" viewBox="0 0 2 10"><rect x="0" y="0" width="2" height="2" fill="#c4c4c4"/><rect x="0" y="4" width="2" height="2" fill="#c4c4c4"/><rect x="0" y="8" width="2" height="2" fill="#c4c4c4"/></svg>
<svg class="a" style="left:1513px;top:393px;" width="14" height="13" viewBox="0 0 14 13"><rect x="1.5" y="1.5" width="11" height="10" fill="none" stroke="#d0d0d0" stroke-width="1.1"/><rect x="3.5" y="3.5" width="7" height="6" fill="#b8b8b8"/><path d="M0 0H3V3H0Z M11 0H14V3H11Z M0 10H3V13H0Z M11 10H14V13H11Z" fill="#d0d0d0"/></svg>
<div class="a t" style="left:1511.3px;top:415.35px;font-size:12px;line-height:16px;letter-spacing:0.28px;">Render Mode</div>
<div class="a" style="left:1665.2px;top:414.6px;width:250.4px;height:16.9px;background:#515151;border:1px solid #363636;border-radius:3px;box-sizing:border-box;"></div>
<div class="a t" style="left:1669.8px;top:415px;font-size:12px;line-height:16px;letter-spacing:0.3px;">World Space</div>
<svg class="a" style="left:1902px;top:421px;" width="8" height="4.5" viewBox="0 0 8 4.5"><path d="M0 0H8 L4 4.5Z" fill="#c4c4c4"/></svg>
<div class="a t" style="left:1529px;top:435.35px;font-size:12px;line-height:16px;letter-spacing:0.21px;">Event Camera</div>
<div class="a" style="left:1668px;top:434.7px;width:244.7px;height:17px;background:#2a2a2a;border:1px solid #212121;border-top-color:#0d0d0d;border-radius:3px;box-sizing:border-box;"></div>
<div class="a t" style="left:1671px;top:435px;font-size:12px;line-height:16px;letter-spacing:0.3px;">None (Camera)</div>
<div class="a" style="left:1894px;top:435.7px;width:17.7px;height:15px;background:#383838;border-radius:0 2px 2px 0;"></div>
<svg class="a" style="left:1897px;top:437.5px;" width="11" height="11" viewBox="0 0 11 11"><circle cx="5.5" cy="5.5" r="4.5" fill="none" stroke="#c4c4c4" stroke-width="1"/><circle cx="5.5" cy="5.5" r="1.6" fill="#c4c4c4"/></svg>
<div class="a" style="left:1528.3px;top:455px;width:384.4px;height:36.5px;background:#404040;border:1px solid #232323;border-radius:3px;box-sizing:border-box;"></div>
<svg class="a" style="left:1533.8px;top:458.7px;" width="26.4" height="26.6" viewBox="0 0 26.4 26.6"><path d="M13.2 0.3 C14 0.3 14.5 0.8 14.9 1.5 L25.6 22.9 C26.4 24.6 25.6 26.2 23.9 26.2 H2.5 C0.8 26.2 0 24.6 0.8 22.9 L11.5 1.5 C11.9 0.8 12.4 0.3 13.2 0.3Z" fill="#ffc107"/><path d="M11.8 7.6H14.6L14.2 18.2H12.2Z" fill="#2f2f2f"/><circle cx="13.2" cy="21.6" r="1.75" fill="#2f2f2f"/></svg>
<div class="a t" style="left:1565px;top:462.25px;font-size:10px;line-height:12px;letter-spacing:0.31px;color:#c0c0c0;">A World Space Canvas with no specified Event Camera may not register</div>
<div class="a t" style="left:1565px;top:474.25px;font-size:10px;line-height:12px;letter-spacing:0.43px;color:#c0c0c0;">UI events correctly.</div>
<div class="a t" style="left:1529px;top:503.35px;font-size:12px;line-height:16px;letter-spacing:0.38px;">Sorting Layer</div>
<div class="a" style="left:1668.2px;top:502.9px;width:244.7px;height:16.9px;background:#515151;border:1px solid #363636;border-radius:3px;box-sizing:border-box;"></div>
<div class="a t" style="left:1672.8px;top:503.3px;font-size:12px;line-height:16px;letter-spacing:0.3px;">Default</div>
<svg class="a" style="left:1899px;top:510px;" width="8" height="4.5" viewBox="0 0 8 4.5"><path d="M0 0H8 L4 4.5Z" fill="#c4c4c4"/></svg>
<div class="a t" style="left:1529px;top:523.35px;font-size:12px;line-height:16px;letter-spacing:0.29px;">Order in Layer</div>
<div class="a" style="left:1668px;top:522.5px;width:244.7px;height:17px;background:#2a2a2a;border:1px solid #212121;border-top-color:#0d0d0d;border-radius:3px;box-sizing:border-box;"></div>
<div class="a t" style="left:1671px;top:522.8px;font-size:12px;line-height:16px;letter-spacing:0.3px;">0</div>
<div class="a t" style="left:1511.3px;top:543.35px;font-size:12px;line-height:16px;letter-spacing:0.35px;width:152px;overflow:hidden;">Additional Shader Channels</div>
<div class="a" style="left:1665.2px;top:542.9px;width:250.4px;height:16.9px;background:#515151;border:1px solid #363636;border-radius:3px;box-sizing:border-box;"></div>
<div class="a t" style="left:1669.8px;top:543.3px;font-size:12px;line-height:16px;letter-spacing:0.3px;">Nothing</div>
<svg class="a" style="left:1902px;top:550px;" width="8" height="4.5" viewBox="0 0 8 4.5"><path d="M0 0H8 L4 4.5Z" fill="#c4c4c4"/></svg>
<div class="a t" style="left:1511.3px;top:563.35px;font-size:12px;line-height:16px;letter-spacing:0.33px;width:152px;overflow:hidden;">Vertex Color Always In Gamma Color Space</div>
<div class="a" style="left:1665.5px;top:564.2px;width:13.5px;height:13.5px;background:#2a2a2a;border:1px solid #212121;border-top-color:#0d0d0d;border-radius:3px;box-sizing:border-box;"></div>
<div class="a" style="left:1510.3px;top:582.5px;width:404.7px;height:41px;background:#404040;border:1px solid #232323;border-radius:3px;box-sizing:border-box;"></div>
<svg class="a" style="left:1515.8px;top:588.75px;" width="26.4" height="26.6" viewBox="0 0 26.4 26.6"><path d="M13.2 0.3 C14 0.3 14.5 0.8 14.9 1.5 L25.6 22.9 C26.4 24.6 25.6 26.2 23.9 26.2 H2.5 C0.8 26.2 0 24.6 0.8 22.9 L11.5 1.5 C11.9 0.8 12.4 0.3 13.2 0.3Z" fill="#ffc107"/><path d="M11.8 7.6H14.6L14.2 18.2H12.2Z" fill="#2f2f2f"/><circle cx="13.2" cy="21.6" r="1.75" fill="#2f2f2f"/></svg>
<div class="a t" style="left:1547px;top:586.25px;font-size:10px;line-height:12px;letter-spacing:0.28px;color:#c0c0c0;">Keep vertex color in Gamma space to allow gamma to linear color space</div>
<div class="a t" style="left:1547px;top:598.25px;font-size:10px;line-height:12px;letter-spacing:0.27px;color:#c0c0c0;">conversion to happen in UI shaders. This will enhance UI color precision in</div>
<div class="a t" style="left:1547px;top:610.25px;font-size:10px;line-height:12px;letter-spacing:0.13px;color:#c0c0c0;">linear color space.</div>
<div class="a" style="left:1492px;top:634px;width:428px;height:1px;background:#1a1a1a;"></div>
<div class="a" style="left:1492px;top:635px;width:428px;height:20.5px;background:#3e3e3e;"></div>
<svg class="a" style="left:1498px;top:641px;" width="9" height="9" viewBox="0 0 9 9"><path d="M0.3 0.5H8.7L4.5 8.5Z" fill="#7d7d7d"/></svg>
<div class="a" style="left:1532.5px;top:638px;width:13.5px;height:13.5px;background:#2a2a2a;border:1px solid #212121;border-top-color:#0d0d0d;border-radius:3px;box-sizing:border-box;"></div>
<svg class="a" style="left:1532.5px;top:638px;" width="13.5" height="13.5" viewBox="0 0 13.5 13.5"><path d="M3.2 7.2 L5.8 9.8 L10.8 4.4" fill="none" stroke="#e4e4e4" stroke-width="1.6"/></svg>
<div class="a t" style="left:1552px;top:636.95px;font-size:12px;line-height:16px;letter-spacing:0.79px;color:#d6d6d6;font-weight:bold;">Canvas Scaler</div>
<svg class="a" style="left:1861.5px;top:639.5px;" width="11" height="11" viewBox="0 0 11 11"><circle cx="5.5" cy="5.5" r="5.3" fill="#c4c4c4"/><path d="M3.9 4.3 A1.7 1.7 0 1 1 6.3 5.8 C5.7 6.2 5.5 6.4 5.5 7.2" fill="none" stroke="#3e3e3e" stroke-width="1.3"/><circle cx="5.5" cy="8.9" r="0.8" fill="#3e3e3e"/></svg>
<svg class="a" style="left:1881.5px;top:639.5px;" width="11" height="11" viewBox="0 0 11 11"><path d="M0.5 3H6.5M8.5 3H10.5M0.5 8H2.5M4.5 8H10.5M7.5 0.8V5.2M3.5 5.8V10.2" stroke="#c4c4c4" stroke-width="1.2" fill="none"/></svg>
<svg class="a" style="left:1906px;top:640px;" width="2" height="10" viewBox="0 0 2 10"><rect x="0" y="0" width="2" height="2" fill="#c4c4c4"/><rect x="0" y="4" width="2" height="2" fill="#c4c4c4"/><rect x="0" y="8" width="2" height="2" fill="#c4c4c4"/></svg>
<svg class="a" style="left:1513px;top:639px;" width="15" height="12" viewBox="0 0 15 12"><rect x="0.6" y="0.6" width="13.4" height="10.4" fill="none" stroke="#d0d0d0" stroke-width="1.2"/><path d="M0.6 1.2H14" stroke="#d0d0d0" stroke-width="1.8"/><rect x="1.6" y="3.6" width="7.4" height="6.6" fill="#e0e0e0"/></svg>
<div class="a t" style="left:1511.3px;top:661.25px;font-size:12px;line-height:16px;letter-spacing:0.19px;color:#7c7c7c;">UI Scale Mode</div>
<div class="a" style="left:1665.2px;top:660.9px;width:250.4px;height:16.9px;background:#474747;border:1px solid #363636;border-radius:3px;box-sizing:border-box;"></div>
<div class="a t" style="left:1669.8px;top:661.3px;font-size:12px;line-height:16px;letter-spacing:0.3px;color:#8a8a8a;">World</div>
<svg class="a" style="left:1902px;top:668px;" width="8" height="4.5" viewBox="0 0 8 4.5"><path d="M0 0H8 L4 4.5Z" fill="#7a7a7a"/></svg>
<div class="a t" style="left:1511.3px;top:689.25px;font-size:12px;line-height:16px;letter-spacing:0.22px;">Dynamic Pixels Per Unit</div>
<div class="a" style="left:1665.5px;top:688.5px;width:249.5px;height:17px;background:#2a2a2a;border:1px solid #212121;border-top-color:#0d0d0d;border-radius:3px;box-sizing:border-box;"></div>
<div class="a t" style="left:1668.5px;top:688.8px;font-size:12px;line-height:16px;letter-spacing:0.3px;">1</div>
<div class="a t" style="left:1511.3px;top:709.25px;font-size:12px;line-height:16px;letter-spacing:0.23px;">Reference Pixels Per Unit</div>
<div class="a" style="left:1665.5px;top:708.7px;width:249.5px;height:17px;background:#2a2a2a;border:1px solid #212121;border-top-color:#0d0d0d;border-radius:3px;box-sizing:border-box;"></div>
<div class="a t" style="left:1668.5px;top:709px;font-size:12px;line-height:16px;letter-spacing:0.3px;">100</div>
<div class="a" style="left:1492px;top:735px;width:428px;height:1px;background:#1a1a1a;"></div>
<div class="a" style="left:1492px;top:736px;width:428px;height:20.5px;background:#3e3e3e;"></div>
<svg class="a" style="left:1498px;top:742px;" width="9" height="9" viewBox="0 0 9 9"><path d="M0.3 0.5H8.7L4.5 8.5Z" fill="#7d7d7d"/></svg>
<div class="a" style="left:1532.5px;top:739px;width:13.5px;height:13.5px;background:#2a2a2a;border:1px solid #212121;border-top-color:#0d0d0d;border-radius:3px;box-sizing:border-box;"></div>
<svg class="a" style="left:1532.5px;top:739px;" width="13.5" height="13.5" viewBox="0 0 13.5 13.5"><path d="M3.2 7.2 L5.8 9.8 L10.8 4.4" fill="none" stroke="#e4e4e4" stroke-width="1.6"/></svg>
<div class="a t" style="left:1552px;top:737.95px;font-size:12px;line-height:16px;letter-spacing:0.73px;color:#d6d6d6;font-weight:bold;">Graphic Raycaster</div>
<svg class="a" style="left:1861.5px;top:740.5px;" width="11" height="11" viewBox="0 0 11 11"><circle cx="5.5" cy="5.5" r="5.3" fill="#c4c4c4"/><path d="M3.9 4.3 A1.7 1.7 0 1 1 6.3 5.8 C5.7 6.2 5.5 6.4 5.5 7.2" fill="none" stroke="#3e3e3e" stroke-width="1.3"/><circle cx="5.5" cy="8.9" r="0.8" fill="#3e3e3e"/></svg>
<svg class="a" style="left:1881.5px;top:740.5px;" width="11" height="11" viewBox="0 0 11 11"><path d="M0.5 3H6.5M8.5 3H10.5M0.5 8H2.5M4.5 8H10.5M7.5 0.8V5.2M3.5 5.8V10.2" stroke="#c4c4c4" stroke-width="1.2" fill="none"/></svg>
<svg class="a" style="left:1906px;top:741px;" width="2" height="10" viewBox="0 0 2 10"><rect x="0" y="0" width="2" height="2" fill="#c4c4c4"/><rect x="0" y="4" width="2" height="2" fill="#c4c4c4"/><rect x="0" y="8" width="2" height="2" fill="#c4c4c4"/></svg>
<svg class="a" style="left:1513.5px;top:739.5px;" width="13" height="13" viewBox="0 0 13 13"><rect x="3" y="3" width="7" height="7" fill="none" stroke="#d8d8d8" stroke-width="1.2"/><path d="M3 1V3H1M10 1V3H12M3 12V10H1M10 12V10H12" stroke="#d8d8d8" stroke-width="1.1" fill="none"/><path d="M0 0 L1.5 1.5 M12 12 L13 13" stroke="#3fa9e0" stroke-width="1"/></svg>
<div class="a t" style="left:1511.3px;top:761.75px;font-size:12px;line-height:16px;letter-spacing:0.37px;color:#7c7c7c;">Script</div>
<div class="a" style="left:1665.5px;top:760.8px;width:249.5px;height:17px;background:#333333;border:1px solid #2a2a2a;border-radius:3px;box-sizing:border-box;"></div>
<svg class="a" style="left:1669px;top:764px;" width="10.5" height="10.5" viewBox="0 0 13 13"><rect x="3" y="3" width="7" height="7" fill="none" stroke="#8a8a8a" stroke-width="1.2"/><path d="M3 1V3H1M10 1V3H12M3 12V10H1M10 12V10H12" stroke="#8a8a8a" stroke-width="1.1" fill="none"/><path d="M0 0 L1.5 1.5 M12 12 L13 13" stroke="#3fa9e0" stroke-width="1"/></svg>
<div class="a t" style="left:1682.5px;top:761.75px;font-size:12px;line-height:16px;letter-spacing:0.26px;color:#7c7c7c;">GraphicRaycaster</div>
<svg class="a" style="left:1899px;top:764px;" width="11" height="11" viewBox="0 0 11 11"><circle cx="5.5" cy="5.5" r="4.5" fill="none" stroke="#7a7a7a" stroke-width="1"/><circle cx="5.5" cy="5.5" r="1.6" fill="#7a7a7a"/></svg>
<div class="a t" style="left:1511.3px;top:779.85px;font-size:12px;line-height:16px;letter-spacing:0.25px;">Ignore Reversed Graphics</div>
<div class="a" style="left:1665.5px;top:781px;width:13.7px;height:13.7px;background:#2a2a2a;border:1px solid #212121;border-top-color:#0d0d0d;border-radius:3px;box-sizing:border-box;"></div>
<svg class="a" style="left:1665.5px;top:781px;" width="13.7" height="13.7" viewBox="0 0 13.7 13.7"><path d="M3.2 7.2 L5.8 9.8 L10.8 4.4" fill="none" stroke="#e4e4e4" stroke-width="1.6"/></svg>
<div class="a t" style="left:1511.3px;top:800.75px;font-size:12px;line-height:16px;letter-spacing:0.34px;">Blocking Objects</div>
<div class="a" style="left:1665.2px;top:799.6px;width:250.4px;height:17.4px;background:#515151;border:1px solid #363636;border-radius:3px;box-sizing:border-box;"></div>
<div class="a t" style="left:1669.8px;top:800.25px;font-size:12px;line-height:16px;letter-spacing:0.3px;">None</div>
<svg class="a" style="left:1902px;top:806px;" width="8" height="4.5" viewBox="0 0 8 4.5"><path d="M0 0H8 L4 4.5Z" fill="#c4c4c4"/></svg>
<div class="a t" style="left:1511.3px;top:821.75px;font-size:12px;line-height:16px;letter-spacing:0.3px;">Blocking Mask</div>
<div class="a" style="left:1665.2px;top:820.9px;width:250.4px;height:17.4px;background:#515151;border:1px solid #363636;border-radius:3px;box-sizing:border-box;"></div>
<div class="a t" style="left:1669.8px;top:821.55px;font-size:12px;line-height:16px;letter-spacing:0.3px;">Everything</div>
<svg class="a" style="left:1902px;top:828px;" width="8" height="4.5" viewBox="0 0 8 4.5"><path d="M0 0H8 L4 4.5Z" fill="#c4c4c4"/></svg>
<div class="a" style="left:1492px;top:847px;width:428px;height:1px;background:#1a1a1a;"></div>
<div class="a" style="left:1592px;top:857px;width:228px;height:21.5px;background:#585858;border:1px solid #303030;border-radius:3px;box-sizing:border-box;"></div>
<div class="a t" style="left:1660px;top:859.55px;font-size:12px;line-height:16px;letter-spacing:0.44px;color:#e0e0e0;">Add Component</div>
<div class="a" style="left:0px;top:1018px;width:1920px;height:22px;background:#191919;"></div>
<div class="a" style="left:1813.5px;top:1021px;width:1px;height:17px;background:#2e2e2e;"></div>
<div class="a" style="left:1840px;top:1021px;width:1px;height:17px;background:#2e2e2e;"></div>
<div class="a" style="left:1867px;top:1021px;width:1px;height:17px;background:#2e2e2e;"></div>
<svg class="a" style="left:1818px;top:1021.5px;" width="16" height="16" viewBox="0 0 16 16"><ellipse cx="8" cy="9.5" rx="3.6" ry="4.4" fill="#9a9a9a"/><circle cx="8" cy="4.2" r="2" fill="#9a9a9a"/><path d="M4.5 7 L2 5 M11.5 7 L14 5 M4.3 10 H1.5 M11.7 10 H14.5 M4.8 12.8 L2.5 15 M11.2 12.8 L13.5 15" stroke="#9a9a9a" stroke-width="1" fill="none"/><path d="M2 1.5 L14 14.5" stroke="#c4c4c4" stroke-width="1.3"/></svg>
<svg class="a" style="left:1845px;top:1021.5px;" width="16" height="16" viewBox="0 0 16 16"><ellipse cx="8" cy="4" rx="5.5" ry="2.4" fill="#9a9a9a"/><path d="M2.5 6 C2.5 9 13.5 9 13.5 6 V8.6 C13.5 11.6 2.5 11.6 2.5 8.6Z M2.5 10.6 C2.5 13.6 13.5 13.6 13.5 10.6 V12.6 C13.5 15.6 2.5 15.6 2.5 12.6Z" fill="#9a9a9a"/><path d="M2 1.5 L14 14.5" stroke="#c4c4c4" stroke-width="1.3"/></svg>
<svg class="a" style="left:1872px;top:1021.5px;" width="16" height="16" viewBox="0 0 16 16"><circle cx="8" cy="8" r="5.6" fill="none" stroke="#9a9a9a" stroke-width="1.4"/><circle cx="8" cy="8" r="2.2" fill="#9a9a9a"/><path d="M2 1.5 L14 14.5" stroke="#c4c4c4" stroke-width="1.3"/></svg>
<svg class="a" style="left:1898px;top:1022px;" width="15" height="15" viewBox="0 0 15 15"><circle cx="7.5" cy="7.5" r="6.4" fill="none" stroke="#c4c4c4" stroke-width="1.1"/><path d="M4.6 7.6 L6.8 9.8 L10.6 5.6" fill="none" stroke="#c4c4c4" stroke-width="1.2"/></svg>
<div class="a" style="left:0px;top:1040px;width:1920px;height:40px;background:#101010;"></div>
<svg class="a" style="left:16px;top:1052px;" width="17" height="16" viewBox="0 0 17 16"><path d="M0 2.3 L7 1.3 V7.6 H0Z M8 1.2 L16.5 0 V7.6 H8Z M0 8.5 H7 V14.8 L0 13.8Z M8 8.5 H16.5 V16 L8 14.9Z" fill="#fff"/></svg>
<div class="a" style="left:48px;top:1040px;width:288px;height:40px;background:#363636;border:1px solid #555;box-sizing:border-box;"></div>
<svg class="a" style="left:60px;top:1051px;" width="17" height="17" viewBox="0 0 17 17"><circle cx="10.5" cy="6.5" r="5.2" fill="none" stroke="#e8e8e8" stroke-width="1.3"/><path d="M6.8 10.2 L0.8 16.2" stroke="#e8e8e8" stroke-width="1.4"/></svg>
<div class="a t" style="left:88.3px;top:1050.5px;font-size:14.5px;line-height:20px;letter-spacing:-0.04px;color:#e8e8e8;">Escriu aquí per cercar</div>
<svg class="a" style="left:260px;top:1041px;" width="76" height="38" viewBox="0 0 76 38"><defs><radialGradient id="ng" cx="0.42" cy="0.5" r="0.6"><stop offset="0" stop-color="#f0dfae"/><stop offset="0.6" stop-color="#cbb98a"/><stop offset="1" stop-color="#363636"/></radialGradient></defs><rect x="0" y="0" width="76" height="38" fill="url(#ng)"/><ellipse cx="24" cy="10" rx="11" ry="9" fill="#1c1820"/><ellipse cx="25" cy="20" rx="8" ry="10" fill="#5a3a2a"/><path d="M6 38 C8 28 16 28 24 30 C32 28 42 30 44 38Z" fill="#15141a"/><path d="M17 30 C20 36 28 36 32 30" stroke="#e0b030" stroke-width="1.5" fill="none"/><ellipse cx="54" cy="11" rx="4.5" ry="5" fill="#6a4634"/><path d="M49 8 C50 4 58 4 59 8Z" fill="#2a8cb0"/><path d="M44 38 C44 24 50 18 56 18 C62 20 64 30 64 38Z" fill="#e8e2d8"/><path d="M62 22 H76 V38 H64Z" fill="#8a5a3a"/><path d="M60 14 L70 19" stroke="#ddd" stroke-width="1"/></svg>
<svg class="a" style="left:350px;top:1050px;" width="20" height="20" viewBox="0 0 20 20"><circle cx="10" cy="10" r="7" fill="none" stroke="#fff" stroke-width="2.2"/></svg>
<svg class="a" style="left:398px;top:1051px;" width="20" height="18" viewBox="0 0 20 18"><path d="M2.5 1H16 M2.5 17H16" stroke="#fff" stroke-width="1.3"/><rect x="2.5" y="5" width="11" height="8" fill="none" stroke="#fff" stroke-width="1.4"/><path d="M17.5 0.5V2.5M17.5 5V13" stroke="#fff" stroke-width="1.6"/></svg>
<svg class="a" style="left:446px;top:1048px;" width="25" height="25" viewBox="0 0 25 25"><rect x="0.5" y="0.5" width="24" height="24" rx="3" fill="#f37a20"/><path d="M5 8 C5 4 10 4 12.5 8 C15 4 20 4 20 8 C20 10 18 11 18 12.5 C18 14 20 15 20 17 C20 21 15 21 12.5 17 C10 21 5 21 5 17 C5 15 7 14 7 12.5 C7 11 5 10 5 8Z" fill="#fff"/><circle cx="10" cy="12.5" r="1.5" fill="#f37a20"/><circle cx="15" cy="12.5" r="1.5" fill="#f37a20"/></svg>
<svg class="a" style="left:496px;top:1049px;" width="24" height="22" viewBox="0 0 24 22"><path d="M1 2H9L11 4H23V19H1Z" fill="#f5c542"/><path d="M1 6H23V19H1Z" fill="#fbd75b"/><path d="M6 12H18V19H6Z" fill="#3f97d8"/><path d="M9 15H15V19H9Z" fill="#fbd75b"/></svg>
<svg class="a" style="left:544px;top:1047px;" width="26" height="26" viewBox="0 0 26 26"><circle cx="13" cy="13" r="12" fill="#db4437"/><path d="M13 13 L2.6 7 A12 12 0 0 0 8 23.9Z" fill="#0f9d58"/><path d="M13 13 L8 23.9 A12 12 0 0 0 25 13Z" fill="#ffcd40"/><path d="M13 13 H25 A12 12 0 0 0 2.6 7Z" fill="#db4437"/><circle cx="13" cy="13" r="5.6" fill="#fff"/><circle cx="13" cy="13" r="4.4" fill="#4285f4"/></svg>
<svg class="a" style="left:593px;top:1048px;" width="26" height="24" viewBox="0 0 26 24"><path d="M18.5 0.5 L25 3.5 V20.5 L18.5 23.5 L6.5 12Z" fill="#2aa5ef"/><path d="M18.5 6.5 V17.5 L11 12Z" fill="#101010"/><path d="M1 8.5 L3.5 6.5 L18.5 18.5 V23.5Z" fill="#0b79c9"/><path d="M1 15.5 L3.5 17.5 L18.5 5.5 V0.5Z" fill="#1a8fdd"/></svg>
<div class="a" style="left:631px;top:1040px;width:48px;height:40px;background:#474747;"></div>
<svg class="a" style="left:643px;top:1047px;" width="25" height="26" viewBox="0 0 25 26"><path d="M12.5 1 L23.5 7 V19 L12.5 25 L1.5 19 V7Z" fill="#1b1b1b"/><path d="M12.5 1 L23.5 7 L12.5 13 L1.5 7Z" fill="#3b3b3b"/><path d="M12.5 5.5 L18 8.5 L15.4 10 L12.5 8.3 L9.6 10 L7 8.5Z M6.2 9.8 L8.8 11.3 V14.6 L11.6 16.2 V19.2 L6.2 16.1Z M18.8 9.8 V16.1 L13.4 19.2 V16.2 L16.2 14.6 V11.3Z" fill="#fff"/></svg>
<svg class="a" style="left:692px;top:1048px;" width="24" height="24" viewBox="0 0 24 24"><rect x="0.5" y="0.5" width="23" height="23" fill="#0a1a5c" stroke="#8ab4f8" stroke-width="1"/></svg>
<div class="a t" style="left:696.5px;top:1052.5px;font-size:13px;line-height:16px;color:#8ab4f8;font-weight:bold;">Ps</div>
<svg class="a" style="left:740px;top:1047px;" width="30" height="28" viewBox="0 0 30 28"><circle cx="13" cy="13" r="12" fill="#db4437"/><path d="M13 13 L2.6 7 A12 12 0 0 0 8 23.9Z" fill="#0f9d58"/><path d="M13 13 L8 23.9 A12 12 0 0 0 25 13Z" fill="#ffcd40"/><path d="M13 13 H25 A12 12 0 0 0 2.6 7Z" fill="#db4437"/><circle cx="13" cy="13" r="5.6" fill="#fff"/><circle cx="13" cy="13" r="4.4" fill="#4285f4"/><circle cx="20" cy="20" r="7" fill="#1a1a1a"/><circle cx="19" cy="22" r="4" fill="#e8c8b0"/></svg>
<svg class="a" style="left:790px;top:1048px;" width="24" height="24" viewBox="0 0 24 24"><path d="M17 1 L23 3.5 V20.5 L17 23 L5 13.5 L2.5 15.5 L0.8 14.6 V9.4 L2.5 8.5 L5 10.5Z" fill="#a06fd6"/><path d="M17 7 V17 L10.5 12Z" fill="#101010"/><path d="M17 1 V7 L5 13.5 L2.5 15.5 L0.8 14.6 L10 9Z" fill="#b98ae8" opacity="0.6"/></svg>
<div class="a" style="left:488px;top:1078px;width:39px;height:2px;background:#76b9ed;"></div>
<div class="a" style="left:631px;top:1078px;width:48px;height:2px;background:#76b9ed;"></div>
<div class="a" style="left:684px;top:1078px;width:39px;height:2px;background:#76b9ed;"></div>
<div class="a" style="left:733px;top:1078px;width:39px;height:2px;background:#76b9ed;"></div>
<div class="a" style="left:782px;top:1078px;width:39px;height:2px;background:#76b9ed;"></div>
<div class="a" style="left:527px;top:1078px;width:4px;height:2px;background:#4a7699;"></div>
<div class="a" style="left:821px;top:1078px;width:4px;height:2px;background:#4a7699;"></div>
<div class="a" style="left:679px;top:1040px;width:2px;height:40px;background:#2a2a2a;"></div>
<svg class="a" style="left:1478px;top:1049px;" width="26" height="24" viewBox="0 0 26 24"><ellipse cx="18" cy="8" rx="6" ry="6" fill="#f5a623"/><path d="M5 22 A5 5 0 0 1 6 12.2 A7 7 0 0 1 19.5 11.5 A5.3 5.3 0 0 1 19.5 22Z" fill="#dfe9f5"/><path d="M5 22 A5 5 0 0 1 3 18 H23 A5 5 0 0 1 19.5 22Z" fill="#a9c6ea"/></svg>
<div class="a t" style="left:1512.5px;top:1050.5px;font-size:13.5px;line-height:20px;letter-spacing:-1.06px;color:#fff;">19°C</div>
<div class="a t" style="left:1549.5px;top:1050.5px;font-size:13.5px;line-height:20px;letter-spacing:0.13px;color:#fff;">Mayorm. nubla...</div>
<svg class="a" style="left:1676px;top:1054px;" width="14" height="9" viewBox="0 0 14 9"><path d="M1 8 L7 2 L13 8" fill="none" stroke="#fff" stroke-width="1.3"/></svg>
<svg class="a" style="left:1698px;top:1053px;" width="18" height="12" viewBox="0 0 18 12"><rect x="4.5" y="2.5" width="12" height="8" fill="none" stroke="#fff" stroke-width="1.1"/><path d="M17 5V8" stroke="#fff" stroke-width="1.3"/><path d="M0.5 4H3.5V7.5H0.5Z M2 0.5V4 M2 7.5V10" stroke="#fff" stroke-width="1" fill="none"/></svg>
<svg class="a" style="left:1725px;top:1052px;" width="16" height="15" viewBox="0 0 16 15"><path d="M1.5 13 A11 11 0 0 1 13 1.5" fill="none" stroke="#9a9a9a" stroke-width="1.3"/><path d="M4.8 13 A7.6 7.6 0 0 1 13 4.8" fill="none" stroke="#fff" stroke-width="1.3"/><path d="M8 13 A4.4 4.4 0 0 1 13 8" fill="none" stroke="#fff" stroke-width="1.3"/><circle cx="12" cy="12.3" r="1.5" fill="#fff"/></svg>
<svg class="a" style="left:1746px;top:1052px;" width="18" height="15" viewBox="0 0 18 15"><path d="M1 5H3.5L7.5 1.2V13.8L3.5 10H1Z" fill="none" stroke="#fff" stroke-width="1.1"/><path d="M10 4.8 A3.6 3.6 0 0 1 10 10.2 M12.2 2.8 A6.6 6.6 0 0 1 12.2 12.2" fill="none" stroke="#fff" stroke-width="1.1"/><path d="M14.6 1 A9.4 9.4 0 0 1 14.6 14" fill="none" stroke="#777" stroke-width="1.1"/></svg>
<div class="a t" style="left:1775px;top:1050px;font-size:12.5px;line-height:20px;letter-spacing:-2.28px;color:#fff;">CAT</div>
<div class="a t" style="left:1821.7px;top:1043px;font-size:12px;line-height:16px;letter-spacing:-1.06px;color:#fff;">15:41</div>
<div class="a t" style="left:1809.4px;top:1061px;font-size:12px;line-height:16px;letter-spacing:-0.27px;color:#fff;">21/2/2024</div>
<svg class="a" style="left:1879px;top:1052px;" width="17" height="17" viewBox="0 0 17 17"><path d="M0.5 0.5H16.5V12.5H11L8.5 15.5L6 12.5H0.5Z" fill="#fff"/><path d="M3.5 4H13.5M3.5 6.5H13.5M3.5 9H10" stroke="#101010" stroke-width="1"/></svg>
<div class="a" style="left:1914.5px;top:1040px;width:1px;height:40px;background:#5a5a5a;"></div>
<svg class="a" style="left:0px;top:0px;pointer-events:none;" width="1920" height="1080" viewBox="0 0 1920 1080"><path d="M1403 61L1564.36 113.58" stroke="#fff" stroke-width="2.2"/><path d="M1581 119L1560.45 119.14L1564.47 106.78Z" fill="#fff"/><path d="M1808 125L1888.43 153.63" stroke="#fff" stroke-width="2.2"/><path d="M1903.5 159L1884.87 157.67L1888.22 148.25Z" fill="#fff"/><path d="M1681.7 149L1684.35 176.08" stroke="#fff" stroke-width="2.2"/><path d="M1686 193L1679.18 174.58L1689.13 173.6Z" fill="#fff"/><path d="M1745 158L1751.49 176.92" stroke="#fff" stroke-width="2.2"/><path d="M1757 193L1746.11 176.65L1755.57 173.41Z" fill="#fff"/><path d="M1813 167L1833.73 192.34" stroke="#fff" stroke-width="2.2"/><path d="M1844.5 205.5L1828.6 193.96L1836.34 187.63Z" fill="#fff"/><path d="M1226 887L1648.49 449.94" stroke="#fff" stroke-width="2.3"/><path d="M1661 437L1651.59 455.72L1642.61 447.04Z" fill="#fff"/><path d="M1130 428.5L1035.88 220.08" stroke="#fff" stroke-width="2.2"/><path d="M1029.3 205.5L1041.72 219.64L1031.7 224.17Z" fill="#fff"/></svg>
</div></body></html>
